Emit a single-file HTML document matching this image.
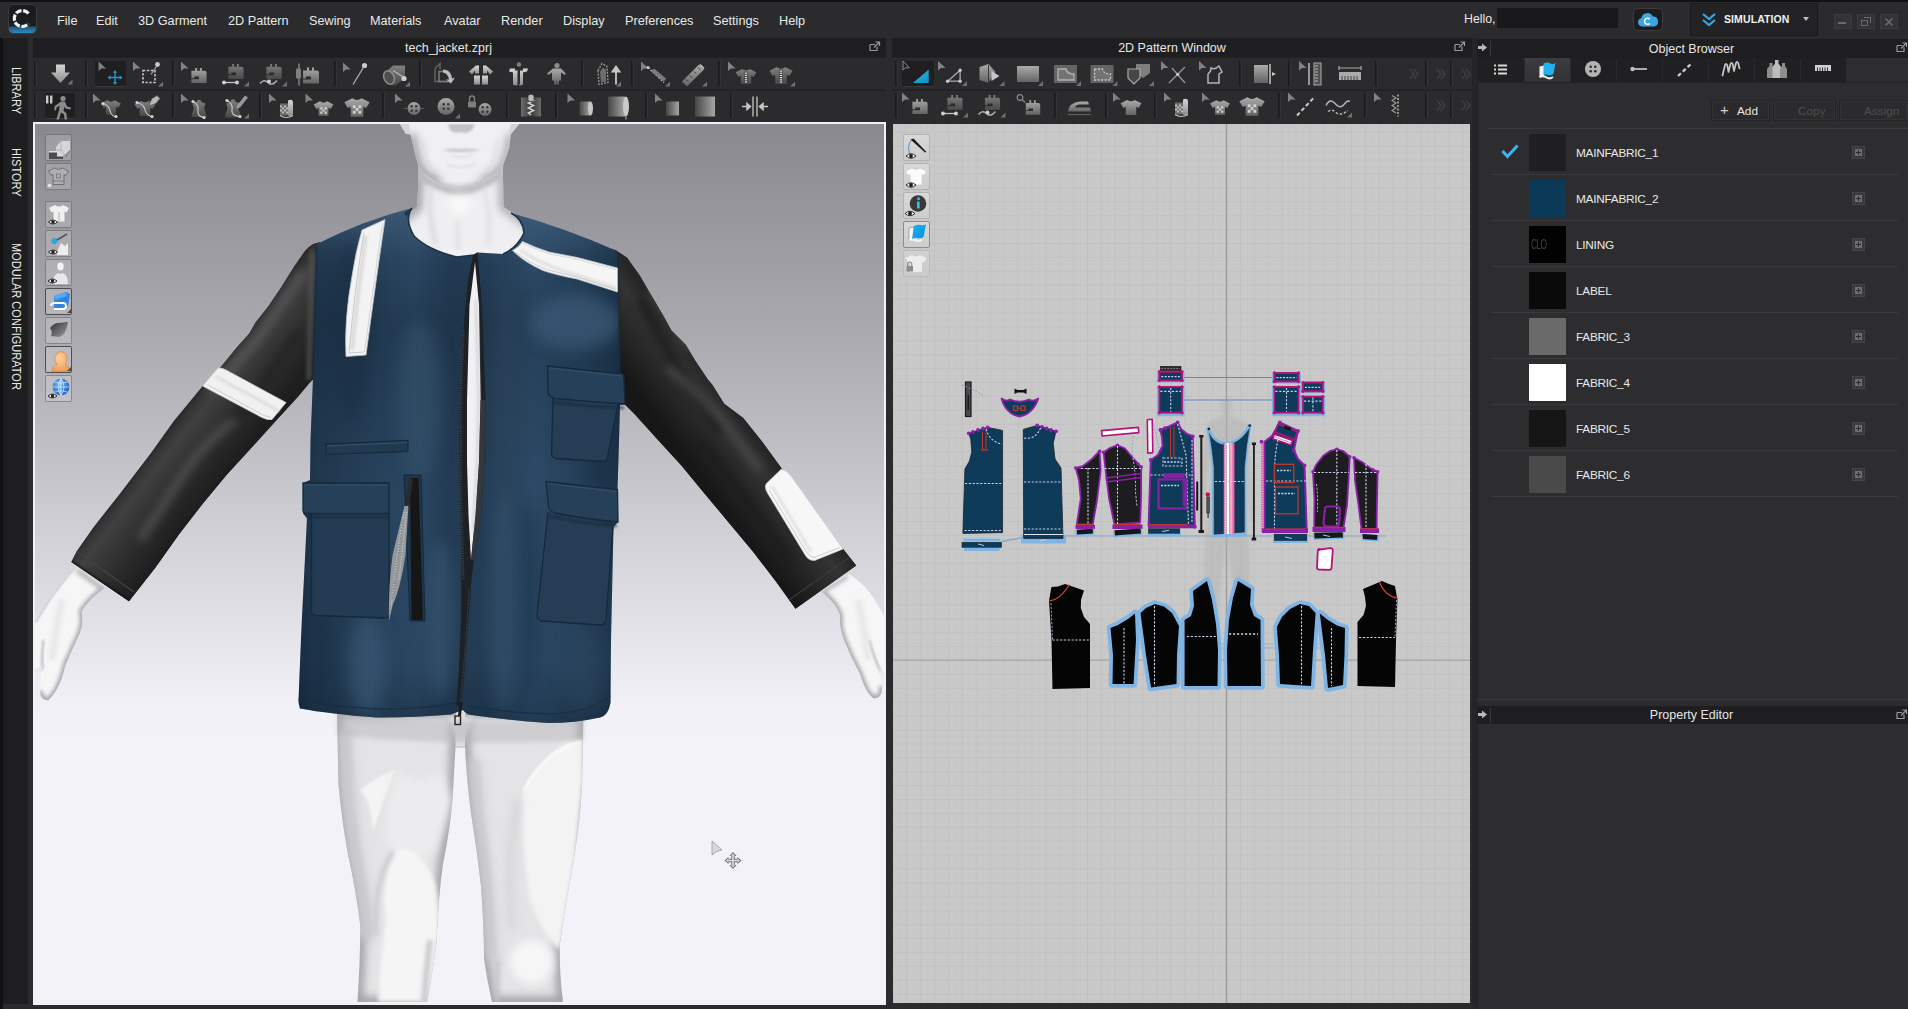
<!DOCTYPE html>
<html><head><meta charset="utf-8"><title>CLO</title>
<style>
*{box-sizing:border-box;margin:0;padding:0}
html,body{width:1908px;height:1009px;overflow:hidden;background:#2b2b2d;}
body{position:relative;font-family:"Liberation Sans",sans-serif;color:#e6e6e6;font-size:13px;}
.abs{position:absolute}
.menu{position:absolute;top:0;left:0;width:1908px;height:38px;background:#2b2b2d;border-top:2px solid #111113}
.menu span{position:absolute;top:12px;font-size:12.7px;color:#e8e8e8;white-space:nowrap;letter-spacing:0px}
.tbar{position:absolute;background:#1e1e20;height:19px;top:38px;text-align:center;font-size:12.5px;line-height:20px;color:#e6e6e6}
.side{position:absolute;left:3px;top:38px;width:25px;height:966px;background:#1e1e20}
.vtxt{position:absolute;left:16px;transform-origin:0 0;transform:rotate(90deg) scale(0.85,1);font-size:13px;color:#e8e8e8;white-space:nowrap;letter-spacing:0px;line-height:14px;margin-top:0}
.sep{position:absolute;width:2px;height:26px;background:#1c1c1e;border-right:1px solid #39393b}
.ic{position:absolute;width:30px;height:26px}
.tsep{position:absolute;width:3px;height:25px;background:#222224;border-left:1px solid #1a1a1c;border-right:1px solid #343436}

.row{position:absolute;left:1492px;width:406px;height:46px;border-bottom:1px solid #3a3a3c}
.row .sw{position:absolute;left:37px;top:5px;width:37px;height:37px}
.row .nm{position:absolute;left:84px;top:17px;font-size:11.8px;color:#e8e8e8;letter-spacing:-0.25px}
.row .ri{position:absolute;left:360px;top:17px;width:13px;height:13px;background:#3a3a3c;border:1px solid #444446}
.btn{position:absolute;top:100px;height:21px;background:#2a2a2c;border:1px solid #242426;box-shadow:inset 0 0 0 1px #333335;font-size:11.8px;line-height:20px}
</style></head>
<body>
<div class="abs" style="left:0;top:0;width:3px;height:1009px;background:#111113"></div>
<div class="menu">
<span style="left:57px">File</span>
<span style="left:96px">Edit</span>
<span style="left:138px">3D Garment</span>
<span style="left:228px">2D Pattern</span>
<span style="left:309px">Sewing</span>
<span style="left:370px">Materials</span>
<span style="left:444px">Avatar</span>
<span style="left:501px">Render</span>
<span style="left:563px">Display</span>
<span style="left:625px">Preferences</span>
<span style="left:713px">Settings</span>
<span style="left:779px">Help</span>
</div>
<svg class="abs" style="left:8px;top:4px" width="29" height="30" viewBox="0 0 29 30">
<defs><linearGradient id="lg1" x1="0" y1="0" x2="0" y2="1"><stop offset="0" stop-color="#1a1a1c"/><stop offset="0.72" stop-color="#1c1d20"/><stop offset="0.8" stop-color="#1f5f86"/><stop offset="1" stop-color="#2f8fc4"/></linearGradient></defs>
<rect x="0.5" y="0.5" width="28" height="29" rx="5" fill="url(#lg1)" stroke="#3a3a3c"/>
<path d="M20.5 9.5 A8 8 0 1 0 20.5 19.5" fill="none" stroke="#f2f2f2" stroke-width="3.2" stroke-dasharray="6.2 1.6"/>
</svg>
<div class="abs" style="left:1464px;top:12px;font-size:12.3px;color:#e8e8e8">Hello,</div>
<div class="abs" style="left:1497px;top:8px;width:121px;height:20px;background:#19191b"></div>
<div class="abs" style="left:1633px;top:8px;width:30px;height:23px;background:#1c1c1e;border:1px solid #3c3c3e;border-radius:5px"></div>
<svg class="abs" style="left:1637px;top:11px" width="22" height="17" viewBox="0 0 22 17"><path d="M5 15.5a4.2 4.2 0 0 1-.6-8.3A6 6 0 0 1 15.8 5.6 5 5 0 0 1 17 15.5z" fill="#3aa7e6"/><path d="M12.7 8.2a3 3 0 1 0 0 4.2" fill="none" stroke="#fff" stroke-width="1.5"/></svg>
<div class="abs" style="left:1690px;top:3px;width:128px;height:33px;background:#232325;border:1px solid #1a1a1c"></div>
<svg class="abs" style="left:1701px;top:12px" width="16" height="15" viewBox="0 0 16 15"><path d="M2 2l6 5 6-5M2 8l6 5 6-5" fill="none" stroke="#34a7e8" stroke-width="2.2"/></svg>
<div class="abs" style="left:1724px;top:13px;font-size:10.5px;font-weight:bold;color:#f0f0f0;letter-spacing:0.1px">SIMULATION</div>
<div class="abs" style="left:1803px;top:17px;width:0;height:0;border-left:3.5px solid transparent;border-right:3.5px solid transparent;border-top:4px solid #bdbdbd"></div>
<div class="abs" style="left:1834px;top:14px;width:18px;height:15px;background:#333335;border:1px solid #3b3b3d"></div>
<div class="abs" style="left:1857px;top:14px;width:18px;height:15px;background:#333335;border:1px solid #3b3b3d"></div>
<div class="abs" style="left:1880px;top:14px;width:18px;height:15px;background:#333335;border:1px solid #3b3b3d"></div>
<div class="abs" style="left:1838px;top:22px;width:8px;height:2px;background:#6a6a6c"></div>
<div class="abs" style="left:1861px;top:20px;width:7px;height:6px;border:1.5px solid #6a6a6c"></div><div class="abs" style="left:1864px;top:17px;width:7px;height:6px;border:1.5px solid #6a6a6c;border-left:none;border-bottom:none"></div>
<svg class="abs" style="left:1884px;top:17px" width="10" height="10" viewBox="0 0 10 10"><path d="M1.5 1.5l7 7M8.5 1.5l-7 7" stroke="#6a6a6c" stroke-width="1.6"/></svg>
<div class="side"></div>
<div class="abs" style="left:28px;top:38px;width:5px;height:971px;background:#2b2b2d"></div>
<div class="vtxt" style="left:23px;top:67px">LIBRARY</div>
<div class="vtxt" style="left:23px;top:148px">HISTORY</div>
<div class="vtxt" style="left:23px;top:243px">MODULAR CONFIGURATOR</div>
<div class="tbar" style="left:33px;width:853px"><span style="position:relative;left:-11px">tech_jacket.zprj</span></div>
<svg class="abs" style="left:869px;top:41px" width="12" height="11" viewBox="0 0 12 11"><path d="M1 3.5h5M1 3.5v6h7v-4" fill="none" stroke="#9a9a9a" stroke-width="1.2"/><path d="M5 6.5l5-5M6.5 1h4v4" fill="none" stroke="#9a9a9a" stroke-width="1.2"/></svg>
<div class="tbar" style="left:892px;width:580px;padding-left:0px"><span style="position:relative;left:-10px">2D Pattern Window</span></div>
<svg class="abs" style="left:1454px;top:41px" width="12" height="11" viewBox="0 0 12 11"><path d="M1 3.5h5M1 3.5v6h7v-4" fill="none" stroke="#9a9a9a" stroke-width="1.2"/><path d="M5 6.5l5-5M6.5 1h4v4" fill="none" stroke="#9a9a9a" stroke-width="1.2"/></svg>
<div class="tbar" style="left:1477px;width:431px;top:39px"><span style="position:relative;left:-1px">Object Browser</span></div>
<svg class="abs" style="left:1896px;top:42px" width="12" height="11" viewBox="0 0 12 11"><path d="M1 3.5h5M1 3.5v6h7v-4" fill="none" stroke="#9a9a9a" stroke-width="1.2"/><path d="M5 6.5l5-5M6.5 1h4v4" fill="none" stroke="#9a9a9a" stroke-width="1.2"/></svg>
<svg class="abs" style="left:1478px;top:43px" width="10" height="9" viewBox="0 0 10 9"><path d="M0 3h4V0.5l5 4-5 4V6H0z" fill="#b9b9b9"/></svg><div class="abs" style="left:1490px;top:41px;width:1px;height:15px;background:#3a3a3c"></div>
<div class="abs" style="left:33px;top:57px;width:853px;height:1px;background:#232325"></div>
<div class="abs" style="left:33px;top:89px;width:853px;height:2px;background:#232325"></div>
<div class="abs" style="left:892px;top:57px;width:580px;height:1px;background:#232325"></div>
<div class="abs" style="left:892px;top:89px;width:580px;height:2px;background:#232325"></div>
<div class="abs" style="left:95px;top:61px;width:31px;height:26px;background:#1f1f21;border-bottom:1px solid #3a3a3c;border-radius:2px"></div>
<div class="abs" style="left:45px;top:93px;width:30px;height:26px;background:#1f1f21;border-bottom:1px solid #3a3a3c;border-radius:2px"></div>
<div class="abs" style="left:902px;top:61px;width:32px;height:26px;background:#1f1f21;border-bottom:1px solid #3a3a3c;border-radius:2px"></div>
<div class="tsep" style="left:34.0px;top:61px"></div>
<div class="tsep" style="left:84.5px;top:61px"></div>
<div class="tsep" style="left:171.5px;top:61px"></div>
<div class="tsep" style="left:333.5px;top:61px"></div>
<div class="tsep" style="left:419.0px;top:61px"></div>
<div class="tsep" style="left:581.0px;top:61px"></div>
<div class="tsep" style="left:630.5px;top:61px"></div>
<div class="tsep" style="left:717.5px;top:61px"></div>
<div class="tsep" style="left:34.0px;top:93px"></div>
<div class="tsep" style="left:84.5px;top:93px"></div>
<div class="tsep" style="left:171.5px;top:93px"></div>
<div class="tsep" style="left:258.5px;top:93px"></div>
<div class="tsep" style="left:381.5px;top:93px"></div>
<div class="tsep" style="left:505.5px;top:93px"></div>
<div class="tsep" style="left:555.0px;top:93px"></div>
<div class="tsep" style="left:644.5px;top:93px"></div>
<div class="tsep" style="left:729.5px;top:93px"></div>
<div class="tsep" style="left:894.5px;top:61px"></div>
<div class="tsep" style="left:1238.5px;top:61px"></div>
<div class="tsep" style="left:1288.0px;top:61px"></div>
<div class="tsep" style="left:1374.5px;top:61px"></div>
<div class="tsep" style="left:1424.5px;top:61px"></div>
<div class="tsep" style="left:1449.5px;top:61px"></div>
<div class="tsep" style="left:894.5px;top:93px"></div>
<div class="tsep" style="left:1053.5px;top:93px"></div>
<div class="tsep" style="left:1104.5px;top:93px"></div>
<div class="tsep" style="left:1153.5px;top:93px"></div>
<div class="tsep" style="left:1277.5px;top:93px"></div>
<div class="tsep" style="left:1363.5px;top:93px"></div>
<div class="tsep" style="left:1424.5px;top:93px"></div>
<div class="tsep" style="left:1449.5px;top:93px"></div>
<svg class="abs" style="left:0;top:56px;opacity:0.88" width="1476" height="68" viewBox="0 56 1476 68"><defs><linearGradient id="gi" x1="0" y1="0" x2="0" y2="1"><stop offset="0" stop-color="#bdbdbd"/><stop offset="1" stop-color="#6c6c6c"/></linearGradient><linearGradient id="gd" x1="0" y1="0" x2="0" y2="1"><stop offset="0" stop-color="#8c8c8c"/><stop offset="1" stop-color="#4c4c4c"/></linearGradient><linearGradient id="gw" x1="0" y1="0" x2="0" y2="1"><stop offset="0" stop-color="#efefef"/><stop offset="1" stop-color="#9a9a9a"/></linearGradient><linearGradient id="gz" x1="0" y1="0" x2="1" y2="0"><stop offset="0" stop-color="#777"/><stop offset="0.5" stop-color="#3a3a3a"/><stop offset="1" stop-color="#777"/></linearGradient><linearGradient id="gc" x1="0" y1="0" x2="1" y2="1"><stop offset="0" stop-color="#35d4fa"/><stop offset="1" stop-color="#0a9fe2"/></linearGradient><linearGradient id="gh" x1="0" y1="0" x2="1" y2="0"><stop offset="0" stop-color="#4a4a4a"/><stop offset="1" stop-color="#b8b8b8"/></linearGradient></defs><g transform="translate(60.5 74.5)"><path d="M-4.500-10h9v8h5L0 8.500-9.500-2h5z" fill="url(#gw)"/><path d="M12 5v5h-5z" fill="#7a7a7a"/></g><g transform="translate(112.5 74.5)"><path d="M-14 -13l0 9.5 3-2.6 4.6 0z" fill="#8e8e8e"/><g transform="translate(2.500 3)" stroke="#24a8e6" stroke-width="1.400" fill="#24a8e6"><path d="M0-5.500v11M-5.500 0h11" /><path d="M0-7.500l-2.200 2.800h4.400zM0 7.500l-2.200-2.800h4.400zM-7.500 0l2.800-2.200v4.400zM7.500 0l-2.800-2.200v4.400z" stroke="none"/></g></g><g transform="translate(149 74.5)"><path d="M-16 -13l0 9.5 3-2.6 4.6 0z" fill="#8e8e8e"/><rect x="-6" y="-4" width="12" height="12" fill="none" stroke="#dcdcdc" stroke-width="1.6" stroke-dasharray="2.4 1.5"/><path d="M2 0l6-9" stroke="#bbb" stroke-width="1.2"/><circle cx="8.5" cy="-10" r="2.4" fill="#ddd"/><path d="M14 7v5h-5z" fill="#7a7a7a"/></g><g transform="translate(196 74.5)"><path d="M-15 -13l0 9.5 3-2.6 4.6 0z" fill="#8e8e8e"/><path transform="translate(3 1) scale(0.95)" d="M-8-5h4v-3h2v3h3v-3h2v3h3q2 0 2 2V8H-8V4h8V1h-5v2h-3z" fill="url(#gi)"/></g><g transform="translate(234 74.5)"><path transform="translate(2 -3) scale(0.95)" d="M-8-5h4v-3h2v3h3v-3h2v3h3q2 0 2 2V8H-8V4h8V1h-5v2h-3z" fill="url(#gd)"/><path d="M-10 8h13" stroke="#ddd" stroke-width="1.3"/><circle cx="-10" cy="8" r="2" fill="#e6e6e6"/><circle cx="3" cy="8" r="2" fill="#e6e6e6"/><path d="M15 7v5h-5z" fill="#7a7a7a"/></g><g transform="translate(272 74.5)"><path transform="translate(2 -3) scale(0.95)" d="M-8-5h4v-3h2v3h3v-3h2v3h3q2 0 2 2V8H-8V4h8V1h-5v2h-3z" fill="url(#gd)"/><path d="M-12 9q4-5 8-1t9-2" stroke="#bbb" stroke-width="1.6" fill="none"/><circle cx="-3" cy="7" r="2" fill="#e6e6e6"/><path d="M15 7v5h-5z" fill="#7a7a7a"/></g><g transform="translate(308 74.5)"><path transform="translate(3 1) scale(1.0)" d="M-8-5h4v-3h2v3h3v-3h2v3h3q2 0 2 2V8H-8V4h8V1h-5v2h-3z" fill="url(#gi)"/><path d="M-9-11v22" stroke="#8a8a8a" stroke-width="1.6"/><rect x="-12" y="-6" width="5" height="10" rx="1" fill="#8a8a8a"/></g><g transform="translate(356 74.5)"><path d="M-13 -12l0 9.5 3-2.6 4.6 0z" fill="#8e8e8e"/><path d="M-3 10L8-8" stroke="#bbb" stroke-width="1.4"/><circle cx="8.5" cy="-9" r="2.6" fill="#e2e2e2"/></g><g transform="translate(395 74.5)"><path d="M-12 0l10-9h12v13l-10 7q-8 0-12-11z" fill="url(#gd)"/><ellipse cx="-6" cy="3" rx="5" ry="7" fill="#555" stroke="#999" stroke-width="1.5" transform="rotate(-25 -6 3)"/><path d="M-2-4l11 7" stroke="#ccc" stroke-width="1.3"/><circle cx="9" cy="4" r="2.6" fill="#e6e6e6"/><path d="M15 7v5h-5z" fill="#7a7a7a"/></g><g transform="translate(443 74.5)"><path d="M-8-6l5-5v6M-8-6v13h13" fill="none" stroke="#6c6c6c" stroke-width="1.4"/><path d="M-4-3h6l5 5v5H-4z" fill="none" stroke="#8a8a8a" stroke-width="1.4"/><path d="M0-5q8 0 9 9l3-1-4 6-5-4 3 0q-1-6-6-7z" fill="#cfcfcf"/></g><g transform="translate(481 74.5)"><path d="M-12-3l7-6h3v8h-4v-3l-3 4zM12-3l-7-6h-3v8h4v-3l3 4z" fill="url(#gw)"/><rect x="-7" y="1" width="6" height="9" fill="url(#gw)"/><rect x="1" y="1" width="6" height="9" fill="url(#gw)"/></g><g transform="translate(519 74.5)"><circle cx="0" cy="-10" r="2.200" fill="#8a8a8a"/><path d="M-9-6h18l-1 3-4 1v12q-4 2-4.500 0v-14h-1v14q-0.500 2-4.500 0v-12l-4-1z" fill="url(#gw)"/><path d="M-4-7h8v3h-3v14h-2v-14h-3z" fill="#2e2e2e"/></g><g transform="translate(557 74.5)"><circle cx="0" cy="-9" r="2.600" fill="#9a9a9a"/><path d="M-4-6h8l5 5-1.500 1.500-3.500-2.500v8h-2.200v4h-2v-4h-0.600v4h-2v-4H-5v-8l-3.500 2.500L-10-1z" fill="url(#gi)"/></g><g transform="translate(608 74.5)"><path d="M-10-4l4-7 5 3 1 16-9 2z" fill="none" stroke="#aaa" stroke-width="1.3" stroke-dasharray="2 1.2"/><path d="M-8-3l3-4 3 2v12l-5 1z" fill="#777"/><path d="M8 10V-4M8-8l-3.5 5h7z" stroke="#ddd" stroke-width="1.8" fill="#ddd"/><path d="M13 7v5h-5z" fill="#7a7a7a"/></g><g transform="translate(656 74.5)"><path d="M-15 -13l0 9.5 3-2.6 4.6 0z" fill="#8e8e8e"/><path d="M-8-7L8 8" stroke="#ddd" stroke-width="1.3" stroke-dasharray="2 1.5"/><path d="M-2-6l12 10-2 3L-5-3z" fill="#888"/><circle cx="-8" cy="-7" r="1.6" fill="#ddd"/><path d="M14 7v5h-5z" fill="#7a7a7a"/></g><g transform="translate(693 74.5)"><path d="M-11 7L6-10l5 5L-6 12z" fill="url(#gi)"/><path d="M-7 5l2 2M-3 1l2 2M1-3l2 2M5-7l2 2" stroke="#333" stroke-width="1"/><path d="M7-10l4 4" stroke="#ddd" stroke-width="1.5"/><path d="M14 7v5h-5z" fill="#7a7a7a"/></g><g transform="translate(743 74.5)"><path d="M-15 -13l0 9.5 3-2.6 4.6 0z" fill="#8e8e8e"/><path transform="translate(3 2) scale(0.95)" d="M-4-8q4 3 8 0l7 3.5-3 5-2.5-1.2V8h-11V-0.7l-2.5 1.2-3-5z" fill="url(#gd)"/><rect x="1.500" y="-3" width="3" height="12" fill="#4a4a4a"/><path d="M3-2v11" stroke="#f0f0f0" stroke-width="2" stroke-dasharray="1.200 1"/></g><g transform="translate(781 74.5)"><path transform="translate(0 1) scale(1.05)" d="M-4-8q4 3 8 0l7 3.5-3 5-2.5-1.2V8h-11V-0.7l-2.5 1.2-3-5z" fill="url(#gd)"/><rect x="-1.800" y="-5" width="3.600" height="14" fill="#4a4a4a"/><path d="M0-4v13" stroke="#f0f0f0" stroke-width="2.200" stroke-dasharray="1.200 1"/><path d="M14 7v5h-5z" fill="#7a7a7a"/></g><g transform="translate(60 106.5)"><rect x="-14" y="-11" width="2.4" height="8" fill="#e0e0e0"/><rect x="-10" y="-11" width="2.4" height="8" fill="#e0e0e0"/><circle cx="3" cy="-8" r="2.6" fill="#9a9a9a"/><path d="M1-5l4 0 2 5 4 1-0.5 2-5-1-1-2-1 4 3 3 0.5 6h-2.4l-0.6-5-3-2-2 7h-2.6l2.6-9 0.6-5-3 2-0.6 3-2-0.4 0.8-4z" fill="#9a9a9a"/></g><g transform="translate(108 106.5)"><path d="M-15 -13l0 9.5 3-2.6 4.6 0z" fill="#8e8e8e"/><path transform="translate(3 1) scale(0.9)" d="M-4-8q4 3 8 0l7 3.5-3 5-2.5-1.2V8h-11V-0.7l-2.5 1.2-3-5z" fill="url(#gd)"/><path d="M-5-3q6 2 7 7t5 6" fill="none" stroke="#ddd" stroke-width="1.2"/><circle cx="-5" cy="-3" r="1.6" fill="#eee"/><circle cx="8" cy="10" r="1.6" fill="#eee"/></g><g transform="translate(147 106.5)"><path transform="translate(-2 2) scale(0.95)" d="M-4-8q4 3 8 0l7 3.5-3 5-2.5-1.2V8h-11V-0.7l-2.5 1.2-3-5z" fill="url(#gd)"/><path d="M-10-4q7 2 8 7t6 7" fill="none" stroke="#ddd" stroke-width="1.2"/><circle cx="-10" cy="-4" r="1.6" fill="#eee"/><circle cx="5" cy="10" r="1.6" fill="#eee"/><path d="M2-2l3-6 5-3 3 3-4 5-5 2z" fill="#ccc" stroke="#555" stroke-width="0.8"/></g><g transform="translate(196 106.5)"><path d="M-15 -13l0 9.5 3-2.6 4.6 0z" fill="#8e8e8e"/><path transform="translate(3 2) scale(0.95)" d="M-2-9h4v2l5 2q-3 5 0 9l1 5H-8l1-5q3-4 0-9l5-2z" fill="url(#gd)"/><path d="M-3-5q6 3 5 9t6 7" fill="none" stroke="#ddd" stroke-width="1.2"/><circle cx="-3" cy="-5" r="1.6" fill="#eee"/><circle cx="8" cy="11" r="1.6" fill="#eee"/></g><g transform="translate(235 106.5)"><path transform="translate(-2 2) scale(1.0)" d="M-2-9h4v2l5 2q-3 5 0 9l1 5H-8l1-5q3-4 0-9l5-2z" fill="url(#gd)"/><path d="M-8-6q6 3 5 9t7 7" fill="none" stroke="#ddd" stroke-width="1.2"/><circle cx="-8" cy="-6" r="1.6" fill="#eee"/><circle cx="5" cy="10" r="1.6" fill="#eee"/><path d="M2-1l8-10 3 2-8 10-4 1z" fill="#aaa"/><path d="M14 7v5h-5z" fill="#7a7a7a"/></g><g transform="translate(284 106.5)"><path d="M-15 -13l0 9.5 3-2.6 4.6 0z" fill="#8e8e8e"/><path d="M-4-3h8v12h-8z" fill="#777"/><rect x="-4.0" y="-1.0" width="2" height="2" fill="#cfcfcf"/><rect x="-4.0" y="3.0" width="2" height="2" fill="#cfcfcf"/><rect x="-2.0" y="1.0" width="2" height="2" fill="#cfcfcf"/><rect x="-2.0" y="5.0" width="2" height="2" fill="#cfcfcf"/><rect x="0.0" y="-1.0" width="2" height="2" fill="#cfcfcf"/><rect x="0.0" y="3.0" width="2" height="2" fill="#cfcfcf"/><rect x="2.0" y="1.0" width="2" height="2" fill="#cfcfcf"/><rect x="2.0" y="5.0" width="2" height="2" fill="#cfcfcf"/><path d="M4-6q4-2 5 1v13q-2 3-5 1z" fill="url(#gw)"/><path d="M-4 9q6 4 13 0" fill="none" stroke="#ddd" stroke-width="1.2"/></g><g transform="translate(320.5 106.5)"><path d="M-15 -13l0 9.5 3-2.6 4.6 0z" fill="#8e8e8e"/><path transform="translate(3 2) scale(0.9)" d="M-4-8q4 3 8 0l7 3.5-3 5-2.5-1.2V8h-11V-0.7l-2.5 1.2-3-5z" fill="url(#gi)"/><rect x="-0.3" y="0.7" width="2.2" height="2.2" fill="#e8e8e8"/><rect x="-0.3" y="5.1" width="2.2" height="2.2" fill="#e8e8e8"/><rect x="1.9" y="2.9" width="2.2" height="2.2" fill="#e8e8e8"/><rect x="4.1" y="0.7" width="2.2" height="2.2" fill="#e8e8e8"/><rect x="4.1" y="5.1" width="2.2" height="2.2" fill="#e8e8e8"/></g><g transform="translate(357 106.5)"><path transform="translate(0 1) scale(1.15)" d="M-4-8q4 3 8 0l7 3.5-3 5-2.5-1.2V8h-11V-0.7l-2.5 1.2-3-5z" fill="url(#gi)"/><rect x="-4.2" y="-1.2" width="2.8" height="2.8" fill="#e8e8e8"/><rect x="-4.2" y="4.4" width="2.8" height="2.8" fill="#e8e8e8"/><rect x="-1.4" y="1.6" width="2.8" height="2.8" fill="#e8e8e8"/><rect x="1.4" y="-1.2" width="2.8" height="2.8" fill="#e8e8e8"/><rect x="1.4" y="4.4" width="2.8" height="2.8" fill="#e8e8e8"/></g><g transform="translate(410 106.5)"><path d="M-15 -13l0 9.5 3-2.6 4.6 0z" fill="#8e8e8e"/><circle cx="4" cy="2" r="6.5" fill="url(#gi)"/><g fill="#3a3a3a"><circle cx="1.7000000000000002" cy="-0.2999999999999998" r="1.3"/><circle cx="6.3" cy="-0.2999999999999998" r="1.3"/><circle cx="1.7000000000000002" cy="4.3" r="1.3"/><circle cx="6.3" cy="4.3" r="1.3"/></g><path d="M-6 2h3M11 2h3" stroke="#666" stroke-width="1"/></g><g transform="translate(446 106.5)"><circle cx="0" cy="0" r="8.5" fill="url(#gi)"/><g fill="#3a3a3a"><circle cx="-2.3" cy="-2.3" r="1.3"/><circle cx="2.3" cy="-2.3" r="1.3"/><circle cx="-2.3" cy="2.3" r="1.3"/><circle cx="2.3" cy="2.3" r="1.3"/></g><path d="M14 7v5h-5z" fill="#7a7a7a"/></g><g transform="translate(481 106.5)"><rect x="-13" y="-5" width="8" height="6" rx="1" fill="#8a8a8a"/><path d="M-11.5-5v-3a2.5 2.5 0 0 1 5 0v3" fill="none" stroke="#8a8a8a" stroke-width="1.4"/><circle cx="4" cy="3" r="6.5" fill="url(#gi)"/><g fill="#3a3a3a"><circle cx="1.7000000000000002" cy="0.7000000000000002" r="1.3"/><circle cx="6.3" cy="0.7000000000000002" r="1.3"/><circle cx="1.7000000000000002" cy="5.3" r="1.3"/><circle cx="6.3" cy="5.3" r="1.3"/></g></g><g transform="translate(531 106.5)"><rect x="-10" y="-9" width="20" height="19" fill="url(#gz)"/><path d="M0-8l2.500 2-5 2.500 5 2.500-5 2.500 5 2.500-5 2.500 2.500 2" stroke="#e6e6e6" stroke-width="1.600" fill="none"/><rect x="-3" y="-12" width="6" height="7" rx="2" fill="#cfcfcf" stroke="#444" stroke-width="0.800"/></g><g transform="translate(582.5 106.5)"><path d="M-15 -13l0 9.5 3-2.6 4.6 0z" fill="#8e8e8e"/><rect x="-3" y="-5" width="11" height="14" fill="url(#gh)"/><ellipse cx="8" cy="2" rx="2.5" ry="7" fill="#ddd"/></g><g transform="translate(618 106.5)"><rect x="-10" y="-10" width="17" height="20" fill="url(#gh)"/><ellipse cx="8" cy="0" rx="3" ry="10" fill="#e0e0e0"/><path d="M8 10v3" stroke="#ccc"/></g><g transform="translate(670 106.5)"><path d="M-15 -13l0 9.5 3-2.6 4.6 0z" fill="#8e8e8e"/><rect x="-4" y="-5" width="13" height="14" fill="url(#gh)"/></g><g transform="translate(705 106.5)"><rect x="-10" y="-10" width="20" height="20" fill="url(#gh)"/></g><g transform="translate(755 106.5)"><path d="M-2-10q0 8 0 8t0 12M2-10q0 8 0 8t0 12" stroke="#ddd" stroke-width="1.3" fill="none"/><path d="M-13 0h7M-8-3l3.5 3-3.5 3zM13 0h-7M8-3l-3.5 3 3.5 3z" stroke="#ddd" stroke-width="1.5" fill="#ddd"/></g><g transform="translate(918 74)"><path d="M-15-13l0 9 2.500-2.200 3.800 0z" fill="none" stroke="#9a9a9a" stroke-width="1"/><path d="M-5 9L10.700-4.400v13.400z" fill="url(#gc)"/></g><g transform="translate(953 74)"><path d="M-15 -13l0 9.5 3-2.6 4.6 0z" fill="#8e8e8e"/><path d="M-5.400 7.200L7.100-3.700v10.900z" fill="none" stroke="#bdbdbd" stroke-width="1.300"/><circle cx="-5.400" cy="7.200" r="1.700" fill="#ddd"/><circle cx="7.100" cy="-3.700" r="1.700" fill="#ddd"/><circle cx="7.100" cy="7.200" r="1.700" fill="#ddd"/><path d="M14 7v5h-5z" fill="#7a7a7a"/></g><g transform="translate(990.5 74)"><path d="M-11-7l9-3 7 8-7 11-9-3z" fill="url(#gi)"/><path d="M-2-9v18" stroke="#3a3a3a" stroke-width="1"/><path d="M1-3l8 5-8 5z" fill="#ddd"/><path d="M14 7v5h-5z" fill="#7a7a7a"/></g><g transform="translate(1028 74)"><rect x="-11" y="-8" width="22" height="16" fill="url(#gi)"/><path d="M15 7v5h-5z" fill="#7a7a7a"/></g><g transform="translate(1066 74)"><rect x="-12" y="-9" width="23" height="18" fill="#6c6c6c"/><path d="M-8-5h8q1 5 8 5v6h-16z" fill="#7e7e7e" stroke="#c4c4c4" stroke-width="1.300"/><path d="M15 7v5h-5z" fill="#7a7a7a"/></g><g transform="translate(1102.5 74)"><rect x="-12" y="-9" width="23" height="18" fill="#6c6c6c"/><path d="M-8-5h8q1 5 8 5v6h-16z" fill="#7e7e7e" stroke="#e0e0e0" stroke-width="1.300" stroke-dasharray="2 1.500"/><path d="M15 7v5h-5z" fill="#7a7a7a"/></g><g transform="translate(1139 74)"><path d="M-3-10h14v9l-7 5-7-5z" fill="#8a8a8a"/><path d="M-11-5h12v9l-6 6-6-6z" fill="#4a4a4a" stroke="#bbb" stroke-width="1.2"/><path d="M15 7v5h-5z" fill="#7a7a7a"/></g><g transform="translate(1176 74)"><path d="M-15 -13l0 9.5 3-2.6 4.6 0z" fill="#8e8e8e"/><path d="M-7 9L9-7M-4-6L9 9" stroke="#a8a8a8" stroke-width="1.200"/><circle cx="1.700" cy="0.400" r="1.600" fill="#ddd"/></g><g transform="translate(1214 74)"><path d="M-15 -13l0 9.5 3-2.6 4.6 0z" fill="#8e8e8e"/><path d="M-3-6q4 2 8-2l3 6-3 2v9h-11v-9q3-2 3-6z" fill="none" stroke="#c8c8c8" stroke-width="1.5"/></g><g transform="translate(1264 74)"><rect x="-10" y="-9" width="14" height="18" fill="url(#gi)"/><path d="M6-10v20" stroke="#ddd" stroke-width="1.5"/><path d="M8-2l4 2-4 2z" fill="#ddd"/></g><g transform="translate(1314 74)"><path d="M-15 -13l0 9.5 3-2.6 4.6 0z" fill="#8e8e8e"/><rect x="0" y="-11" width="7" height="22" fill="#555" stroke="#ccc" stroke-width="0.9"/><path d="M1-8h3M1-5h3M1-2h3M1 1h3M1 4h3M1 7h3" stroke="#ddd" stroke-width="0.9"/><path d="M-5-11v22" stroke="#ddd" stroke-width="1.4"/></g><g transform="translate(1350 74)"><rect x="-11" y="-2" width="22" height="8" fill="#bdbdbd"/><path d="M-8 6v-4M-5 6v-4M-2 6v-4M1 6v-4M4 6v-4M7 6v-4" stroke="#444" stroke-width="1"/><path d="M-11-6h22M-11-8v4M11-8v4" stroke="#bbb" stroke-width="1.2"/></g><g transform="translate(1413 74)"><path d="M-3-5l4 5-4 5M1-5l4 5-4 5" fill="none" stroke="#444446" stroke-width="1.3"/></g><g transform="translate(1440 74)"><path d="M-3-5l4 5-4 5M1-5l4 5-4 5" fill="none" stroke="#444446" stroke-width="1.3"/></g><g transform="translate(1465 74)"><path d="M-3-5l4 5-4 5M1-5l4 5-4 5" fill="none" stroke="#444446" stroke-width="1.3"/></g><g transform="translate(917 105.5)"><path d="M-15 -13l0 9.5 3-2.6 4.6 0z" fill="#8e8e8e"/><path transform="translate(3 1) scale(0.95)" d="M-8-5h4v-3h2v3h3v-3h2v3h3q2 0 2 2V8H-8V4h8V1h-5v2h-3z" fill="url(#gi)"/></g><g transform="translate(953 105.5)"><path transform="translate(2 -3) scale(0.95)" d="M-8-5h4v-3h2v3h3v-3h2v3h3q2 0 2 2V8H-8V4h8V1h-5v2h-3z" fill="url(#gd)"/><path d="M-10 8h13" stroke="#ddd" stroke-width="1.3"/><circle cx="-10" cy="8" r="2" fill="#e6e6e6"/><circle cx="3" cy="8" r="2" fill="#e6e6e6"/><path d="M15 7v5h-5z" fill="#7a7a7a"/></g><g transform="translate(990.5 105.5)"><path transform="translate(2 -3) scale(0.95)" d="M-8-5h4v-3h2v3h3v-3h2v3h3q2 0 2 2V8H-8V4h8V1h-5v2h-3z" fill="url(#gd)"/><path d="M-12 9q4-5 8-1t9-2" stroke="#bbb" stroke-width="1.6" fill="none"/><circle cx="-3" cy="7" r="2" fill="#e6e6e6"/><path d="M15 7v5h-5z" fill="#7a7a7a"/></g><g transform="translate(1030 105.5)"><circle cx="-10" cy="-8" r="2.8" fill="none" stroke="#999" stroke-width="1.2"/><path d="M-8-6l3 3" stroke="#999" stroke-width="1.3"/><path transform="translate(3 2) scale(0.9)" d="M-8-5h4v-3h2v3h3v-3h2v3h3q2 0 2 2V8H-8V4h8V1h-5v2h-3z" fill="url(#gi)"/></g><g transform="translate(1079 105.5)"><path d="M-11 6q1-9 12-10l8 0 1 3-9 0q-4 0-5 3h15l1 4z" fill="url(#gi)"/><path d="M-11 9h23" stroke="#666" stroke-width="1.2"/></g><g transform="translate(1128 105.5)"><path d="M-15 -13l0 9.5 3-2.6 4.6 0z" fill="#8e8e8e"/><path transform="translate(3 2) scale(0.95)" d="M-4-8q4 3 8 0l7 3.5-3 5-2.5-1.2V8h-11V-0.7l-2.5 1.2-3-5z" fill="url(#gi)"/></g><g transform="translate(1179 105.5)"><path d="M-15 -13l0 9.5 3-2.6 4.6 0z" fill="#8e8e8e"/><path d="M-4-3h8v12h-8z" fill="#777"/><rect x="-4.0" y="-1.0" width="2" height="2" fill="#cfcfcf"/><rect x="-4.0" y="3.0" width="2" height="2" fill="#cfcfcf"/><rect x="-2.0" y="1.0" width="2" height="2" fill="#cfcfcf"/><rect x="-2.0" y="5.0" width="2" height="2" fill="#cfcfcf"/><rect x="0.0" y="-1.0" width="2" height="2" fill="#cfcfcf"/><rect x="0.0" y="3.0" width="2" height="2" fill="#cfcfcf"/><rect x="2.0" y="1.0" width="2" height="2" fill="#cfcfcf"/><rect x="2.0" y="5.0" width="2" height="2" fill="#cfcfcf"/><path d="M4-6q4-2 5 1v13q-2 3-5 1z" fill="url(#gw)"/><path d="M-4 9q6 4 13 0" fill="none" stroke="#ddd" stroke-width="1.2"/></g><g transform="translate(1217 105.5)"><path d="M-15 -13l0 9.5 3-2.6 4.6 0z" fill="#8e8e8e"/><path transform="translate(3 2) scale(0.9)" d="M-4-8q4 3 8 0l7 3.5-3 5-2.5-1.2V8h-11V-0.7l-2.5 1.2-3-5z" fill="url(#gi)"/><rect x="-0.3" y="0.7" width="2.2" height="2.2" fill="#e8e8e8"/><rect x="-0.3" y="5.1" width="2.2" height="2.2" fill="#e8e8e8"/><rect x="1.9" y="2.9" width="2.2" height="2.2" fill="#e8e8e8"/><rect x="4.1" y="0.7" width="2.2" height="2.2" fill="#e8e8e8"/><rect x="4.1" y="5.1" width="2.2" height="2.2" fill="#e8e8e8"/></g><g transform="translate(1252 105.5)"><path transform="translate(0 1) scale(1.15)" d="M-4-8q4 3 8 0l7 3.5-3 5-2.5-1.2V8h-11V-0.7l-2.5 1.2-3-5z" fill="url(#gi)"/><rect x="-4.2" y="-1.2" width="2.8" height="2.8" fill="#e8e8e8"/><rect x="-4.2" y="4.4" width="2.8" height="2.8" fill="#e8e8e8"/><rect x="-1.4" y="1.6" width="2.8" height="2.8" fill="#e8e8e8"/><rect x="1.4" y="-1.2" width="2.8" height="2.8" fill="#e8e8e8"/><rect x="1.4" y="4.4" width="2.8" height="2.8" fill="#e8e8e8"/></g><g transform="translate(1303 105.5)"><path d="M-15 -13l0 9.5 3-2.6 4.6 0z" fill="#8e8e8e"/><path d="M-6 10L11-8" stroke="#e0e0e0" stroke-width="2" stroke-dasharray="4 2.5"/></g><g transform="translate(1338 105.5)"><path d="M-12 0q4-8 9-2t9 1 6-3" fill="none" stroke="#ccc" stroke-width="1.4"/><path d="M-10 6q4-3 8 1t12-2" fill="none" stroke="#ccc" stroke-width="1.4" stroke-dasharray="2.5 1.8"/><path d="M14 7v5h-5z" fill="#7a7a7a"/></g><g transform="translate(1389 105.5)"><path d="M-15 -13l0 9.5 3-2.6 4.6 0z" fill="#8e8e8e"/><path d="M3-10l4 2.5-4 2.5 4 2.5-4 2.5 4 2.5-4 2.5 4 2.5" fill="none" stroke="#aaa" stroke-width="1.1"/><path d="M9-11v22" stroke="#ddd" stroke-width="1.3" stroke-dasharray="2 1.5"/></g><g transform="translate(1440 105.5)"><path d="M-3-5l4 5-4 5M1-5l4 5-4 5" fill="none" stroke="#444446" stroke-width="1.3"/></g><g transform="translate(1465 105.5)"><path d="M-3-5l4 5-4 5M1-5l4 5-4 5" fill="none" stroke="#444446" stroke-width="1.3"/></g></svg>
<div class="abs" style="left:33px;top:122px;width:853px;height:883px;background:#f2f2f6"></div>
<svg class="abs" style="left:35px;top:124px" width="849" height="878" viewBox="35 124 849 878">
<defs>
<linearGradient id="bg3" gradientUnits="userSpaceOnUse" x1="0" y1="124" x2="0" y2="1002">
<stop offset="0" stop-color="#88888e"/><stop offset="0.25" stop-color="#ababb1"/><stop offset="0.45" stop-color="#cdcdd3"/><stop offset="0.58" stop-color="#e3e3e9"/><stop offset="0.665" stop-color="#f1f1f7"/><stop offset="0.7" stop-color="#f2f2f8"/><stop offset="1" stop-color="#f2f2f8"/></linearGradient>
<linearGradient id="skinH" gradientUnits="userSpaceOnUse" x1="400" y1="0" x2="520" y2="0">
<stop offset="0" stop-color="#cfcfd2"/><stop offset="0.25" stop-color="#f4f4f5"/><stop offset="0.6" stop-color="#f7f7f8"/><stop offset="1" stop-color="#d4d4d7"/></linearGradient>
<linearGradient id="legL" gradientUnits="userSpaceOnUse" x1="336" y1="0" x2="456" y2="0">
<stop offset="0" stop-color="#b2b2b6"/><stop offset="0.06" stop-color="#d0d0d3"/><stop offset="0.2" stop-color="#e4e4e6"/><stop offset="0.5" stop-color="#efeff0"/><stop offset="0.8" stop-color="#e2e2e4"/><stop offset="0.94" stop-color="#cfcfd2"/><stop offset="1" stop-color="#b8b8bc"/></linearGradient>
<linearGradient id="legR" gradientUnits="userSpaceOnUse" x1="465" y1="0" x2="584" y2="0">
<stop offset="0" stop-color="#b8b8bc"/><stop offset="0.06" stop-color="#cfcfd2"/><stop offset="0.2" stop-color="#e0e0e2"/><stop offset="0.5" stop-color="#efeff0"/><stop offset="0.8" stop-color="#e6e6e8"/><stop offset="0.94" stop-color="#d2d2d5"/><stop offset="1" stop-color="#b4b4b8"/></linearGradient>
<linearGradient id="blueH" gradientUnits="userSpaceOnUse" x1="298" y1="0" x2="625" y2="0">
<stop offset="0" stop-color="#192e44"/><stop offset="0.05" stop-color="#20384f"/><stop offset="0.2" stop-color="#28425c"/><stop offset="0.36" stop-color="#2d4a67"/><stop offset="0.47" stop-color="#243d56"/><stop offset="0.56" stop-color="#253f58"/><stop offset="0.72" stop-color="#2f4e6c"/><stop offset="0.86" stop-color="#28435e"/><stop offset="0.97" stop-color="#1e364d"/><stop offset="1" stop-color="#17293d"/></linearGradient>
<linearGradient id="blueV" gradientUnits="userSpaceOnUse" x1="0" y1="208" x2="0" y2="723">
<stop offset="0" stop-color="#5f83a6" stop-opacity="0.35"/><stop offset="0.07" stop-color="#5f83a6" stop-opacity="0.12"/><stop offset="0.12" stop-color="#0b1a28" stop-opacity="0.05"/><stop offset="0.22" stop-color="#0b1a28" stop-opacity="0.22"/><stop offset="0.4" stop-color="#0b1a28" stop-opacity="0.1"/><stop offset="0.55" stop-color="#0b1a28" stop-opacity="0"/><stop offset="0.88" stop-color="#0b1a28" stop-opacity="0"/><stop offset="0.95" stop-color="#0b1a28" stop-opacity="0.18"/><stop offset="1" stop-color="#0b1a28" stop-opacity="0.35"/></linearGradient>
<linearGradient id="slL" gradientUnits="userSpaceOnUse" x1="204" y1="387" x2="259" y2="430">
<stop offset="0" stop-color="#303030"/><stop offset="0.18" stop-color="#404040"/><stop offset="0.42" stop-color="#353535"/><stop offset="0.7" stop-color="#2a2a2a"/><stop offset="1" stop-color="#1e1e1e"/></linearGradient>
<linearGradient id="slR" gradientUnits="userSpaceOnUse" x1="738.5" y1="414" x2="684" y2="455">
<stop offset="0" stop-color="#262626"/><stop offset="0.22" stop-color="#333"/><stop offset="0.5" stop-color="#2a2a2a"/><stop offset="0.75" stop-color="#202020"/><stop offset="1" stop-color="#171717"/></linearGradient>
<filter id="b2" color-interpolation-filters="sRGB" filterUnits="userSpaceOnUse" x="0" y="100" width="900" height="920"><feGaussianBlur stdDeviation="2"/></filter>
<filter id="b4" color-interpolation-filters="sRGB" filterUnits="userSpaceOnUse" x="0" y="100" width="900" height="920"><feGaussianBlur stdDeviation="4"/></filter>
<filter id="b8" color-interpolation-filters="sRGB" filterUnits="userSpaceOnUse" x="0" y="100" width="900" height="920"><feGaussianBlur stdDeviation="8"/></filter>
<filter id="b1" color-interpolation-filters="sRGB" filterUnits="userSpaceOnUse" x="0" y="100" width="900" height="920"><feGaussianBlur stdDeviation="0.8"/></filter>
<pattern id="weave" width="3" height="2.4" patternUnits="userSpaceOnUse"><circle cx="0.8" cy="0.6" r="0.55" fill="#0e2232" opacity="0.35"/><circle cx="2.3" cy="1.8" r="0.55" fill="#0e2232" opacity="0.35"/></pattern>
<clipPath id="cBody"><path d="M317 244 Q362 221 412 208 Q404 219 414 236 Q428 250 457 257 L474 255 L477 252.5 L503 254 Q517 248 524 233 Q523 219 511 213 Q565 228 617 251 L619 328 L620 372 L624.5 375 L625 404 L620 405 L619 440 L617.5 489 L618 522 L613.5 527 L611 640 L610.5 703 Q608 716 600 717.5 Q575 723 548 723 Q505 720 468 714.5 L462.5 710 L451 714.5 Q410 718 376 717.5 Q330 714 300 708.5 Q298 703 298.6 698 L301.5 627 L307 518 L303 513.5 L303 483 L310 480 L310.5 440 L313 379 Z"/></clipPath>
<clipPath id="cLS"><path d="M320 242 L313 244 Q308 247 304.8 251 L293.7 267 L281 287.6 L268.3 306.6 L255.6 322.5 L249.3 333.6 L236.6 347.8 L222.3 365.3 L202.7 386 L174.2 420.4 L150.4 453.7 L119.5 494.2 L93.3 527.5 L76.7 551.3 L71.4 562 L129 601.2 L155.1 567.9 L178.9 534.6 L202.7 503.7 L226.5 475.1 L250.3 449 L274.1 422.8 L297.9 396.7 L309.8 382.4 L313.5 379 L320 379 Z"/></clipPath>
<clipPath id="cRS"><path d="M612 249 L616 250.3 L627 257.4 L639.6 274.9 L652.3 297.1 L663.4 316.1 L671.4 330.4 L685.6 344.7 L695.1 360.5 L707.8 379.5 L712.3 384.8 L724.2 403.8 L743.2 418.1 L762.2 441.8 L781.3 468 L800.3 494.2 L824.1 525.1 L843.1 548.9 L856.2 565.5 L795.5 608.8 L776.5 582.2 L752.7 551.3 L728.9 522.7 L705.1 494.2 L681.4 465.6 L657.6 439.5 L633.8 413.3 L621.9 401.4 L619.5 398 L612 398 Z"/></clipPath>
</defs>
<rect x="35" y="124" width="850" height="878" fill="url(#bg3)"/>
<clipPath id="cNeck"><path d="M418.500 166 L418 190 L417 207 Q410 212 402 219 L402 300 L532 300 L532 228 Q515 214 503.500 207 L502.800 166Z"/></clipPath><clipPath id="cFace"><path d="M400 124 L406 134 L410.500 134.300 L415.700 156.600 L419.400 168.500 Q429 177.500 439.500 183.400 Q450 187.300 460.300 188.200 Q470.700 186.700 481.100 181.900 Q493 174.500 501.900 168.500 L506.300 156.600 L509.300 147.700 L510.800 134.300 L519 124Z"/></clipPath>
<path d="M418.500 166 L418 190 L417 207 Q410 212 402 219 L402 300 L532 300 L532 228 Q515 214 503.500 207 L502.800 166Z" fill="#efeff1"/>
<g clip-path="url(#cNeck)">
<path d="M418 166 L417 207 Q410 212 402 219" fill="none" stroke="#9c9ca2" stroke-width="10" filter="url(#b4)"/>
<path d="M503 166 L503.500 207 Q515 214 532 228" fill="none" stroke="#a4a4aa" stroke-width="8" filter="url(#b4)"/>
<path d="M419.400 168.500 Q429 177.500 439.500 183.400 Q450 187.300 460.300 188.200 Q470.700 186.700 481.100 181.900 Q493 174.500 501.900 168.500 L502 178 Q483 192 460 196 Q436 192 419 180Z" fill="#bcbcc1" filter="url(#b2)"/>
<path d="M430 188 Q428 215 436 245" stroke="#dcdce0" stroke-width="5" fill="none" filter="url(#b2)"/>
<path d="M484 188 Q492 215 488 245" stroke="#e0e0e3" stroke-width="4" fill="none" filter="url(#b2)"/>
<ellipse cx="460" cy="205" rx="12" ry="10" fill="#f8f8f9" filter="url(#b4)"/>
<path d="M457 222 Q459 240 457 254" stroke="#dedee2" stroke-width="3" fill="none" filter="url(#b2)"/>
</g>
<path d="M400 124 L406 134 L410.500 134.300 L415.700 156.600 L419.400 168.500 Q429 177.500 439.500 183.400 Q450 187.300 460.300 188.200 Q470.700 186.700 481.100 181.900 Q493 174.500 501.900 168.500 L506.300 156.600 L509.300 147.700 L510.800 134.300 L519 124Z" fill="#f0f0f2"/>
<g clip-path="url(#cFace)">
<path d="M410.500 134.300 L415.700 156.600 L419.400 168.500 Q429 177.500 439.500 183.400" fill="none" stroke="#9c9ca2" stroke-width="9" filter="url(#b4)"/>
<path d="M510.800 134.300 L509.300 147.700 L506.300 156.600 L501.900 168.500 Q493 174.500 481 182" fill="none" stroke="#a6a6ac" stroke-width="8" filter="url(#b4)"/>
<path d="M440 184 Q460 190 481 182" fill="none" stroke="#c2c2c7" stroke-width="3" filter="url(#b2)"/>
<path d="M448 124 L450 130 Q455 134 460.500 132 Q467 134 472 130 L475 124Z" fill="#c2c2c6" filter="url(#b1)"/>
<path d="M442.500 150.500 Q452 147.500 460.500 149 Q470 147.500 481 150.500 Q470 152 460.500 152 Q452 152 442.500 150.500Z" fill="#c9c9cd" filter="url(#b1)"/>
<path d="M449 153 Q461 160 474 153 Q470 157.500 461 158 Q453 157.500 449 153Z" fill="#dadadd" filter="url(#b1)"/>
<path d="M447 165 Q461 170 476 164" stroke="#e2e2e5" stroke-width="2" fill="none" filter="url(#b1)"/>
<path d="M422 140 Q425 160 432 172" stroke="#dcdce0" stroke-width="3" fill="none" filter="url(#b2)"/><path d="M498 140 Q495 160 488 172" stroke="#dfdfe3" stroke-width="3" fill="none" filter="url(#b2)"/>
</g>
<path d="M419.400 168.500 Q429 177.500 439.500 183.400 Q450 187.300 460.300 188.200 Q470.700 186.700 481.100 181.900 Q493 174.500 501.900 168.500" fill="none" stroke="#b6b6bb" stroke-width="1.200" filter="url(#b1)"/>
<path d="M400 124 L406 134 L410.500 134.300 L409 124Z M519 124 L510.800 134.300 L508.500 134 L511 124Z" fill="#d4d4d8"/>
<path d="M440 250 L510 250 L490 580 L460 580 Z" fill="#f1f1f3"/>
<clipPath id="cLL"><path d="M337 712 L338.5 785 Q342 822 348 854.5 Q356 890 360.5 927 Q360 965 357.5 1002 L427 1002 Q433 970 436.5 943 Q438 900 443 864 Q450 830 452.5 800 L455.5 747 L456 712Z"/></clipPath><clipPath id="cRL"><path d="M465 712 L465 747 Q467 785 471.5 816.5 Q477 850 481 886 Q484 925 484 959 Q487 980 492 1002 L563 1002 Q559 970 560 943 Q565 905 572.5 867 Q580 825 582 785 L583.5 712 Z"/></clipPath>
<path d="M440 712 L482 712 L470 747 L453 747Z" fill="#e2e2e4"/>
<path d="M337 712 L338.5 785 Q342 822 348 854.5 Q356 890 360.5 927 Q360 965 357.5 1002 L427 1002 Q433 970 436.5 943 Q438 900 443 864 Q450 830 452.5 800 L455.5 747 L456 712Z" fill="#e4e4e6"/><path d="M465 712 L465 747 Q467 785 471.5 816.5 Q477 850 481 886 Q484 925 484 959 Q487 980 492 1002 L563 1002 Q559 970 560 943 Q565 905 572.5 867 Q580 825 582 785 L583.5 712 Z" fill="#e4e4e6"/>
<g clip-path="url(#cLL)">
<path d="M337 712 L338.5 785 Q342 822 348 854.5 Q356 890 360.5 927 Q360 965 357.5 1002 L427 1002 Q433 970 436.5 943 Q438 900 443 864 Q450 830 452.5 800 L455.5 747 L456 712Z" fill="none" stroke="#9c9ca2" stroke-width="10" filter="url(#b4)"/>
<path d="M345 730 Q347 800 356 860 Q364 900 367 940" stroke="#c9c9cd" stroke-width="14" fill="none" filter="url(#b4)"/>
<path d="M395 770 Q384 800 373 830 Q371 800 360 790 Q376 777 395 770Z" fill="#f4f4f5" filter="url(#b1)"/>
<path d="M397 768 Q420 790 440 770 L452 800 Q440 840 428 860 Q410 850 390 850 Q378 830 397 768Z" fill="#ececee" filter="url(#b4)"/>
<path d="M395 850 Q418 842 434 880 Q442 905 438 945 Q434 975 428 1002 L378 1002 Q380 960 386 920 Q380 880 395 850Z" fill="#f5f5f6" filter="url(#b2)"/>
<path d="M393 852 Q372 884 376 935" stroke="#cdcdd1" stroke-width="5" fill="none" filter="url(#b2)"/>
<path d="M430 940 Q426 975 424 1002" stroke="#c4c4c8" stroke-width="5" fill="none" filter="url(#b2)"/>
</g>
<g clip-path="url(#cRL)">
<path d="M465 712 L465 747 Q467 785 471.5 816.5 Q477 850 481 886 Q484 925 484 959 Q487 980 492 1002 L563 1002 Q559 970 560 943 Q565 905 572.5 867 Q580 825 582 785 L583.5 712 Z" fill="none" stroke="#9c9ca2" stroke-width="10" filter="url(#b4)"/>
<path d="M474 760 Q478 820 486 880 Q490 930 492 960" stroke="#cacace" stroke-width="12" fill="none" filter="url(#b4)"/>
<path d="M583 738 Q550 745 523 790 Q520 840 530 900 Q545 940 560 950 L575 860 L583 780Z" fill="#f3f3f4" filter="url(#b2)"/>
<path d="M581 742 Q548 748 524 790" stroke="#fafafa" stroke-width="3" fill="none" filter="url(#b1)"/>
<path d="M518 800 Q506 860 512 930" stroke="#d2d2d6" stroke-width="6" fill="none" filter="url(#b4)"/>
<ellipse cx="532" cy="962" rx="22" ry="22" fill="#f6f6f7" filter="url(#b4)"/>
<path d="M498 960 Q496 985 497 1002" stroke="#c6c6ca" stroke-width="5" fill="none" filter="url(#b2)"/>
</g>
<path d="M446 716 Q455 738 460.500 744 Q466 738 475 716Z" fill="#dadadd" filter="url(#b2)"/>
<path d="M455.500 747 L465 747" stroke="#c0c0c4" stroke-width="1.2"/>
<path d="M337 714 Q460 728 584 719 L584 740 Q460 748 337 735Z" fill="#b4b4b9" opacity="0.45" filter="url(#b2)"/>
<clipPath id="cLH"><path d="M75.500 566 L105 587.500 Q88 600 81.500 611.500 Q84 622 80 633 Q72 650 65.500 665 Q60 690 48 700.500 Q40 700 40 691 Q40 676 42.500 665 L38 670 L35 668 L35 622 Q44 606 53 593.500 Q63 580 75.500 566Z"/></clipPath><clipPath id="cRH"><path d="M849 574 L821.500 591.500 Q836 603 840 615 Q839 628 844 640 Q851 658 860 674 Q866 694 874 698.500 Q883 698 882 686 L879 668 L885 676 L885 618 Q876 600 866 588 Q858 580 849 574Z"/></clipPath>
<path d="M75.500 566 L105 587.500 Q88 600 81.500 611.500 Q84 622 80 633 Q72 650 65.500 665 Q60 690 48 700.500 Q40 700 40 691 Q40 676 42.500 665 L38 670 L35 668 L35 622 Q44 606 53 593.500 Q63 580 75.500 566Z" fill="#f6f6f7"/><g clip-path="url(#cLH)"><path d="M105 587.500 Q88 600 81.500 611.500 Q84 622 80 633 Q72 650 65.500 665 Q60 690 48 700.500 Q40 700 40 691" fill="none" stroke="#9d9da3" stroke-width="5" filter="url(#b2)"/><path d="M75.500 566 Q63 580 53 593.500 Q44 606 35 622" fill="none" stroke="#c6c6cb" stroke-width="3" filter="url(#b1)"/><path d="M43.500 640 Q41.500 655 42.500 668 L38 671" stroke="#a9a9ae" stroke-width="1.600" fill="none" filter="url(#b1)"/><path d="M77 570 L103 589" stroke="#b4b4b9" stroke-width="5" fill="none" filter="url(#b2)"/><path d="M62 600 Q56 625 52 660" stroke="#e6e6e9" stroke-width="6" fill="none" filter="url(#b2)"/></g>
<path d="M849 574 L821.500 591.500 Q836 603 840 615 Q839 628 844 640 Q851 658 860 674 Q866 694 874 698.500 Q883 698 882 686 L879 668 L885 676 L885 618 Q876 600 866 588 Q858 580 849 574Z" fill="#f6f6f7"/><g clip-path="url(#cRH)"><path d="M821.500 591.500 Q836 603 840 615 Q839 628 844 640 Q851 658 860 674 Q866 694 874 698.500 Q883 698 882 686" fill="none" stroke="#9d9da3" stroke-width="5" filter="url(#b2)"/><path d="M869 640 Q875 660 879 668 L885 680" fill="none" stroke="#a9a9ae" stroke-width="1.600" filter="url(#b1)"/><path d="M847 576 L823 591" stroke="#b4b4b9" stroke-width="5" fill="none" filter="url(#b2)"/><path d="M858 600 Q864 625 868 660" stroke="#e6e6e9" stroke-width="6" fill="none" filter="url(#b2)"/></g>
<path d="M320 242 L313 244 Q308 247 304.8 251 L293.7 267 L281 287.6 L268.3 306.6 L255.6 322.5 L249.3 333.6 L236.6 347.8 L222.3 365.3 L202.7 386 L174.2 420.4 L150.4 453.7 L119.5 494.2 L93.3 527.5 L76.7 551.3 L71.4 562 L129 601.2 L155.1 567.9 L178.9 534.6 L202.7 503.7 L226.5 475.1 L250.3 449 L274.1 422.8 L297.9 396.7 L309.8 382.4 L313.5 379 L320 379 Z" fill="#2c2c2c"/>
<g clip-path="url(#cLS)">
<path d="M316 243 L40 600 L150 630 L330 380Z" fill="url(#slL)"/>
<path d="M304 270 L258 338 L210 392" stroke="#565656" stroke-width="8" fill="none" filter="url(#b4)"/>
<path d="M300 330 L262 385 L230 425" stroke="#222" stroke-width="7" fill="none" filter="url(#b4)"/>
<path d="M236 420 Q205 440 178 482 Q160 510 140 540" stroke="#505050" stroke-width="7" fill="none" filter="url(#b4)"/>
<path d="M225 455 Q195 490 165 540" stroke="#222" stroke-width="6" fill="none" filter="url(#b4)"/>
<path d="M312 250 L309 380" stroke="#505050" stroke-width="4" fill="none" filter="url(#b2)"/>
<path d="M76 551 L134 592" stroke="#444" stroke-width="1.200" fill="none"/>
<path d="M71 562 L129.500 601.500" stroke="#141414" stroke-width="3" fill="none" filter="url(#b1)"/>
</g>
<path d="M612 249 L616 250.3 L627 257.4 L639.6 274.9 L652.3 297.1 L663.4 316.1 L671.4 330.4 L685.6 344.7 L695.1 360.5 L707.8 379.5 L712.3 384.8 L724.2 403.8 L743.2 418.1 L762.2 441.8 L781.3 468 L800.3 494.2 L824.1 525.1 L843.1 548.9 L856.2 565.5 L795.5 608.8 L776.5 582.2 L752.7 551.3 L728.9 522.7 L705.1 494.2 L681.4 465.6 L657.6 439.5 L633.8 413.3 L621.9 401.4 L619.5 398 L612 398 Z" fill="#262626"/>
<g clip-path="url(#cRS)">
<path d="M617 251 L880 590 L780 630 L600 403Z" fill="url(#slR)"/>
<path d="M640 300 L680 372 L722 432" stroke="#1c1c1c" stroke-width="8" fill="none" filter="url(#b4)"/>
<path d="M650 290 Q672 320 690 350" stroke="#484848" stroke-width="7" fill="none" filter="url(#b4)"/>
<path d="M668 368 Q700 392 730 430 Q745 450 760 470" stroke="#4a4a4a" stroke-width="7" fill="none" filter="url(#b4)"/>
<path d="M700 440 Q740 490 790 560" stroke="#1c1c1c" stroke-width="8" fill="none" filter="url(#b4)"/>
<path d="M850 557 L789 600" stroke="#3a3a3a" stroke-width="1.200" fill="none"/>
</g>
<path d="M218 368 Q222 367.500 226 370 L286 402.500 L272 419.500 Q268 420.500 262 417.500 L202.700 386Z" fill="#f1f1f1" stroke="#cfcfcf" stroke-width="0.800"/>
<path d="M215 376 L279 411" stroke="#dedede" stroke-width="3" fill="none" filter="url(#b1)"/>
<path d="M781.300 469.200 Q787 470.500 791 476 L843.100 548.900 L814.500 560.500 Q808.500 560.500 805.500 555.500 L767.500 493 Q764 487 766.500 483.500Z" fill="#f7f7f7" stroke="#cfcfcf" stroke-width="0.800"/>
<path d="M772 486 L811 552" stroke="#e2e2e2" stroke-width="3" fill="none" filter="url(#b1)"/>
<path d="M317 244 Q362 221 412 208 Q404 219 414 236 Q428 250 457 257 L474 255 L477 252.5 L503 254 Q517 248 524 233 Q523 219 511 213 Q565 228 617 251 L619 328 L620 372 L624.5 375 L625 404 L620 405 L619 440 L617.5 489 L618 522 L613.5 527 L611 640 L610.5 703 Q608 716 600 717.5 Q575 723 548 723 Q505 720 468 714.5 L462.5 710 L451 714.5 Q410 718 376 717.5 Q330 714 300 708.5 Q298 703 298.6 698 L301.5 627 L307 518 L303 513.5 L303 483 L310 480 L310.5 440 L313 379 Z" fill="url(#blueH)"/>
<g clip-path="url(#cBody)">
<rect x="290" y="200" width="345" height="530" fill="url(#blueV)"/>
<ellipse cx="352" cy="330" rx="22" ry="90" fill="#182c40" opacity="0.5" filter="url(#b8)"/>
<ellipse cx="420" cy="400" rx="22" ry="80" fill="#38566f" opacity="0.6" filter="url(#b8)"/>
<ellipse cx="575" cy="322" rx="46" ry="28" fill="#3d5d7b" opacity="0.8" filter="url(#b8)"/>
<ellipse cx="505" cy="420" rx="14" ry="150" fill="#30485f" opacity="0.5" filter="url(#b8)"/>
<ellipse cx="600" cy="440" rx="18" ry="50" fill="#182c40" opacity="0.4" filter="url(#b8)"/>
<ellipse cx="530" cy="600" rx="12" ry="100" fill="#1a3046" opacity="0.45" filter="url(#b8)"/>
<ellipse cx="368" cy="665" rx="18" ry="50" fill="#3a5a78" opacity="0.8" filter="url(#b8)"/>
<ellipse cx="320" cy="650" rx="12" ry="60" fill="#182c40" opacity="0.4" filter="url(#b8)"/>
<ellipse cx="440" cy="620" rx="14" ry="80" fill="#3a5a78" opacity="0.7" filter="url(#b8)"/>
<ellipse cx="503" cy="600" rx="13" ry="110" fill="#36546f" opacity="0.65" filter="url(#b8)"/>
<ellipse cx="585" cy="670" rx="20" ry="40" fill="#2f4a64" opacity="0.5" filter="url(#b8)"/>
<rect x="290" y="200" width="345" height="530" fill="url(#weave)"/>
<path d="M299 700 Q330 706 376 709 Q420 710 461 702 M470 706 Q510 713 548 714 Q585 714 611 696" fill="none" stroke="#172e42" stroke-width="1.3" opacity="0.8"/>
</g>
<path d="M316.5 246 L313 379" stroke="#182c3e" stroke-width="1.5" fill="none" opacity="0.8"/><path d="M618 253 L620 372" stroke="#182c3e" stroke-width="1.5" fill="none" opacity="0.8"/>
<path d="M362 230 L385 219.5 Q376 280 366 355 L346 356.5 Q344 320 352 276 Q356 250 362 230Z" fill="#f3f3f3" stroke="#bfc3c8" stroke-width="0.8"/>
<path d="M366 236 Q358 290 352 350" stroke="#dcdcdc" stroke-width="4" fill="none" filter="url(#b1)"/>
<path d="M522.5 241.5 Q536 248 549 252 L577.5 257.5 L617.5 268 L617.5 292 L577 279 Q556 275 543 270.5 Q524 262 512.5 250.5 Q519 247 522.5 241.5Z" fill="#f5f5f5" stroke="#bfc3c8" stroke-width="0.8"/>
<path d="M520 250 Q545 267 580 276 L616 288" stroke="#e0e0e0" stroke-width="3" fill="none" filter="url(#b1)"/>
<path d="M364 233 Q355 285 349 353 L364 352" fill="none" stroke="#b9bcc0" stroke-width="0.700"/><path d="M382.500 223 Q374 282 364.500 352" fill="none" stroke="#c4c7ca" stroke-width="0.700"/>
<path d="M514.500 251.500 Q530 263.500 548 270 L577 277 L616 289.500" fill="none" stroke="#b9bcc0" stroke-width="0.700"/><path d="M523 243.500 Q538 250.500 550 254 L578 259.500 L616 269.500" fill="none" stroke="#c9ccd0" stroke-width="0.700"/>
<path d="M207 384.500 L264 415.500 L270.500 417" fill="none" stroke="#b9bcc0" stroke-width="0.700"/><path d="M769 490 L807 553 Q809.500 557 814 557.500 L840 547.500" fill="none" stroke="#b9bcc0" stroke-width="0.700"/>
<path d="M553 398 L551.5 454 Q552 458 556 458.5 L603 461.5 Q607 461 607.5 457 L618 404" fill="#253d55" stroke="#16293a" stroke-width="1.3"/>
<path d="M547.5 366 L623.5 374 L625 404 Q590 402 556 398.5 Q548 397 548 392Z" fill="#27405a" stroke="#16293a" stroke-width="1.3"/>
<path d="M549 368 L622 376" stroke="#37506a" stroke-width="1.2" fill="none"/>
<path d="M553 402 Q590 407 624 408" stroke="#15283a" stroke-width="3" fill="none" filter="url(#b1)" opacity="0.6"/>
<path d="M548 512 L537 615 Q537 620 542 621 L600 625 Q605 625 606 620 L613 526" fill="#253e55" stroke="#16293a" stroke-width="1.3"/>
<path d="M546 481.5 L617.5 489.5 L618 522 Q585 519 555 513 Q549 511 548.5 506Z" fill="#27405a" stroke="#16293a" stroke-width="1.3"/>
<path d="M547.5 483.5 L616 491.5" stroke="#37506a" stroke-width="1.2" fill="none"/>
<path d="M550 516 Q585 524 617 526" stroke="#15283a" stroke-width="3" fill="none" filter="url(#b1)" opacity="0.6"/>
<path d="M326 444 L408 440.5 L408 451.5 L326 454.5Z" fill="#213a50" stroke="#16293a" stroke-width="1.2"/><path d="M327 446 L407 442.5" stroke="#37506a" stroke-width="1" fill="none"/>
<path d="M311.5 514 L311.5 611 Q312 615 316 615.5 L385 618 Q389 618 389 614 L389 513" fill="#243c53" stroke="#16293a" stroke-width="1.3"/>
<path d="M303 483 L389 483 L389 511 Q389 513.5 386 513.5 L306 513.5 Q303 513 303 510Z" fill="#27405a" stroke="#16293a" stroke-width="1.3"/>
<path d="M304.5 485 L388 485" stroke="#37506a" stroke-width="1.2" fill="none"/>
<path d="M306 517 L389 517" stroke="#15283a" stroke-width="3" fill="none" filter="url(#b1)" opacity="0.6"/>
<path d="M404 475 L421 475 L425 621 L410 621Z" fill="#1f374d" stroke="#16293a" stroke-width="1"/>
<path d="M410 478 L418.5 478 L423 620 L411.5 620Z" fill="#161616"/>
<path d="M409 479 L413 479 L409 508 L405 507Z" fill="#2a2a2a"/><path d="M404.400 506 L408.400 506 L405.500 555 Q400 590 393 604 L389 620.500 Q388 590 392.600 555Z" fill="#94989b"/><path d="M404 512 L394 580 M406.500 512 L399 580 M401 530 L391 606" stroke="#c4c7ca" stroke-width="1.300" fill="none" stroke-dasharray="1.200 1.400"/><path d="M403 520 L392 600" stroke="#6e7275" stroke-width="1" fill="none" stroke-dasharray="1 2"/>
<path d="M473 255 L477.500 252.500 L481.500 300 L484 360 L485.500 400 L484.500 462 L481 515 L474 560 L471.500 580 L467 640 L463.500 684 L460.500 706 L456.500 706 L459 670 L461 620 L461.500 560 L460 500 L459.500 440 L460 400 L463 334 L468 280Z" fill="#1d2024"/>
<path d="M475 262 L479 305 L480.500 400 L479 462 L475.500 515 L471 560 L468.500 515 L467 462 L467 400 L469.500 305Z" fill="#f1f1f3"/>
<path d="M476 300 L478.500 400 L477 462 L473 530" stroke="#d9d9dc" stroke-width="3" fill="none" filter="url(#b1)"/>
<path d="M480.500 400 L479 462 L475.500 515 L471 560 L474 560 L481 515 L484.500 462 L485.500 400Z" fill="#34383c"/>
<path d="M463.500 330 L461 400 L461 500 L463.500 580" stroke="#3a3f45" stroke-width="2.200" fill="none" stroke-dasharray="1.200 1.200"/>
<path d="M469 590 Q466 650 460 704" stroke="#3e4348" stroke-width="1.400" fill="none" stroke-dasharray="1.200 1.200"/>
<path d="M459.5 702 L462.5 702 L461 716 L458 716Z" fill="#1a1a1a"/><rect x="455" y="716" width="5.5" height="8.5" fill="none" stroke="#222" stroke-width="1.4"/>
<path d="M412 208 Q404 219 414 236 Q428 250 457 257 L474 255" fill="none" stroke="#1a3247" stroke-width="1.6"/><path d="M503 254 Q517 248 524 233 Q523 219 511 213" fill="none" stroke="#1a3247" stroke-width="1.6"/>
<path d="M412 208 Q408 212 406.5 217 L404 213 Z" fill="#1c3449"/>
<path d="M712 841 L712 855 L716.5 851.5 L722 850Z" fill="#d8d8da" stroke="#9a9a9e" stroke-width="0.8"/>
<g transform="translate(733 860.500)"><path d="M0-5v10M-5 0h10" stroke="#6e6e73" stroke-width="3.400"/><path d="M0-8.500l-3.600 4h7.200zM0 8.500l-3.600-4h7.200zM-8.500 0l4-3.600v7.200zM8.500 0l-4-3.600v7.200z" fill="#6e6e73"/><path d="M0-5v10M-5 0h10" stroke="#dedee2" stroke-width="1.600"/><path d="M0-7l-2 2.300h4zM0 7l-2-2.300h4zM-7 0l2.300-2v4zM7 0l-2.300-2v4z" fill="#dedee2"/></g>
</svg>
<div class="abs" style="left:45px;top:134px;width:27px;height:27px;background:rgba(255,255,255,0.17);border:1px solid rgba(70,70,76,0.45);border-radius:2px"></div>
<div class="abs" style="left:45px;top:163px;width:27px;height:27px;background:rgba(255,255,255,0.17);border:1px solid rgba(70,70,76,0.45);border-radius:2px"></div>
<div class="abs" style="left:45px;top:201px;width:27px;height:27px;background:rgba(255,255,255,0.17);border:1px solid rgba(70,70,76,0.45);border-radius:2px"></div>
<div class="abs" style="left:45px;top:230px;width:27px;height:27px;background:rgba(255,255,255,0.17);border:1px solid rgba(70,70,76,0.45);border-radius:2px"></div>
<div class="abs" style="left:45px;top:259px;width:27px;height:27px;background:rgba(255,255,255,0.17);border:1px solid rgba(70,70,76,0.45);border-radius:2px"></div>
<div class="abs" style="left:45px;top:288px;width:27px;height:27px;background:rgba(255,255,255,0.17);border:1px solid rgba(40,40,46,0.75);border-radius:2px"></div>
<div class="abs" style="left:45px;top:317px;width:27px;height:27px;background:rgba(255,255,255,0.17);border:1px solid rgba(70,70,76,0.45);border-radius:2px"></div>
<div class="abs" style="left:45px;top:346px;width:27px;height:27px;background:rgba(255,255,255,0.17);border:1px solid rgba(40,40,46,0.75);border-radius:2px"></div>
<div class="abs" style="left:45px;top:375px;width:27px;height:27px;background:rgba(255,255,255,0.17);border:1px solid rgba(70,70,76,0.45);border-radius:2px"></div>
<svg class="abs" style="left:45px;top:134px" width="27" height="270" viewBox="45 134 27 270"><defs><linearGradient id="sg1" x1="0" y1="0" x2="1" y2="1"><stop offset="0" stop-color="#2e2e2e"/><stop offset="1" stop-color="#a0a0a0"/></linearGradient><radialGradient id="sg2" cx="0.4" cy="0.35" r="0.7"><stop offset="0" stop-color="#ffd2a0"/><stop offset="1" stop-color="#f09a50"/></radialGradient><radialGradient id="sg3" cx="0.4" cy="0.35" r="0.7"><stop offset="0" stop-color="#6fb6f5"/><stop offset="1" stop-color="#1f5fc0"/></radialGradient></defs><path d="M56 147l5-6h9v9l-5 5h-9z" fill="#d6d6d8"/><path d="M61 141v9h-5M61 150l4 5" stroke="#a8a8aa" stroke-width="0.800" fill="none"/><path d="M65 155l5-5v3l-5 5z" fill="#8c8c8e"/><path d="M49 151h8v4h6v4h-14z" fill="#4c4c4e"/><path d="M49 151h8v1.500h-8zM57 155h6v1.500h-6z" fill="#e0e0e0"/><path d="M54.500 168q4 3 8 0l6 3-2.500 4.500-2-1v10h-11v-10l-2 1-2.500-4.500z" fill="#b0b0b2" stroke="#707074" stroke-width="1"/><rect x="56.500" y="174" width="4" height="4" fill="none" stroke="#707074" stroke-width="0.800"/><path d="M53 181h11" stroke="#707074" stroke-width="0.800"/><circle cx="49.500" cy="185.500" r="1.800" fill="#e8e8e8"/><path d="M55 205q4 3 8 0l6 3-2.500 4.500-2-1v10h-11v-10l-2 1-2.500-4.500z" fill="#f0f0f0"/><path d="M59 212v10" stroke="#d0d0d0" stroke-width="2"/><path d="M48.5 222q4.500-4 9 0q-4.500 4-9 0z" fill="#f4f4f4" stroke="#1c1c1c" stroke-width="0.900"/><circle cx="53" cy="222" r="1.700" fill="#1c1c1c"/><path d="M57 252l4-9 4 3 3-3v12h-11z" fill="#ececec"/><circle cx="54.500" cy="241" r="3" fill="#2aa5e8"/><path d="M57 240l10-6" stroke="#555" stroke-width="1.600"/><path d="M48.5 252q4.500-4 9 0q-4.500 4-9 0z" fill="#f4f4f4" stroke="#1c1c1c" stroke-width="0.900"/><circle cx="53" cy="252" r="1.700" fill="#1c1c1c"/><ellipse cx="60.500" cy="266.500" rx="3.200" ry="4" fill="#f2f2f2"/><path d="M53 284q0-9 5-11l2.500 1 2.500-1q5 2 5 11z" fill="#e8e8e8"/><path d="M48.0 281q4.500-4 9 0q-4.500 4-9 0z" fill="#f4f4f4" stroke="#1c1c1c" stroke-width="0.900"/><circle cx="52.5" cy="281" r="1.700" fill="#1c1c1c"/><path d="M54 296l12-4 4 2-2 12-5 3-9-1z" fill="#2f86e0"/><path d="M54 296l12-4 1 4-12 4z" fill="#58a8f2"/><path d="M51 306q0-3 4-3h8q3 0 3 3t-3 3h-9" fill="none" stroke="#fff" stroke-width="1.800"/><path d="M71 313v-4l-4 4z" fill="#4a4a4c"/><path d="M50 328q4-5 8-5l10-1q-1 6-3 10t-6 5l-8-1q2-4-1-8z" fill="url(#sg1)"/><path d="M52 371.500q0-6 5-7q-3-3-2-8q2-5 6-5q6 1 6 7q0 4-2 6q5 2 5 7z" fill="url(#sg2)" stroke="#c98a4a" stroke-width="0.700"/><path d="M71 371v-4l-4 4z" fill="#4a4a4c"/><circle cx="61" cy="387" r="8.500" fill="url(#sg3)"/><path d="M52.500 387h17M61 378.500v17M54.500 382q6.500 2.500 13 0M54.500 392q6.500-2.500 13 0M61 378.500q-6 8.500 0 17M61 378.500q6 8.500 0 17M61 378.500q-2.500 8.500 0 17" stroke="#d9ecff" stroke-width="0.700" fill="none"/><path d="M48.0 396q4.500-4 9 0q-4.500 4-9 0z" fill="#f4f4f4" stroke="#1c1c1c" stroke-width="0.900"/><circle cx="52.5" cy="396" r="1.700" fill="#1c1c1c"/></svg>
<svg class="abs" style="left:893px;top:124px" width="577" height="879" viewBox="893 124 577 879">
<defs><pattern id="grid" x="1226" y="660" width="13.9" height="13.9" patternUnits="userSpaceOnUse"><path d="M7.450 0V13.900M0 7.450H13.900" stroke="#c6c6c6" stroke-width="1" fill="none"/><path d="M0.500 0V13.900M0 0.500H13.900" stroke="#c1c1c1" stroke-width="1" fill="none"/></pattern><filter id="pb" color-interpolation-filters="sRGB"><feGaussianBlur stdDeviation="0.6"/></filter><filter id="pb2" color-interpolation-filters="sRGB"><feGaussianBlur stdDeviation="1.5"/></filter></defs>
<rect x="893" y="124" width="577" height="879" fill="#c9c9c9"/><rect x="893" y="124" width="577" height="879" fill="url(#grid)"/>
<path d="M1226.5 124V1003" stroke="#9c9c9c" stroke-width="1.4"/><path d="M893 660.2H1470" stroke="#a6a6a6" stroke-width="1.2"/>
<g fill="#b4b4b4" opacity="0.5" filter="url(#pb2)"><ellipse cx="1226.500" cy="405" rx="6" ry="7.500"/><path d="M1223 411 L1230 411 L1231 417 Q1240 419 1246 423 Q1250 440 1252 470 L1255 520 L1250 522 L1245 470 L1243 455 Q1242 480 1245 510 Q1250 545 1250 575 L1246 640 L1238 640 L1233 585 L1227.500 548 L1225.500 548 L1221 585 L1215 640 L1207 640 L1204 575 Q1204 545 1208 510 Q1211 480 1210 455 L1208 470 L1203 522 L1198 520 L1201 470 Q1203 440 1207 423 Q1213 419 1222 417Z"/></g>
<g filter="url(#pb)"><path d="M1182 377.5H1274.5M1182 400H1274.5" fill="none" stroke="#5f8dbb" stroke-width="1.2" stroke-linejoin="round" /><path d="M1001.500 541.500L1023.500 537.500" fill="none" stroke="#86a9cc" stroke-width="1.5" stroke-linejoin="round" /><path d="M1063 536H1386" fill="none" stroke="#7d9fc2" stroke-width="1.2" stroke-linejoin="round" opacity="0.8"/><path d="M1135 644H1320M1135 648H1320" fill="none" stroke="#7ea6cf" stroke-width="1.2" stroke-linejoin="round" opacity="0.7"/><rect x="965.5" y="382.0" width="5.5" height="34.5" fill="#4a4a4c" stroke="#1a1a1a" stroke-width="1.2" /><rect x="967.6" y="395.0" width="1.2" height="15.0" fill="#111" /><path d="M962 385 Q975 390 984 396" fill="none" stroke="#8f95c8" stroke-width="1" stroke-dasharray="1.8 1.8"/><path d="M1014.500 388.500l3 1.500h6l3-1.500v5.500l-3-1.500h-6l-3 1.500z" fill="#111" /><path d="M1001.500 398.500 Q1007 402 1010 399.500 Q1019.500 404 1029 399.500 Q1033 402 1038.300 398.500 Q1033 414 1019.500 416.500 Q1006 414 1001.500 398.500Z" fill="#0d3b59" stroke="#8b1fa8" stroke-width="1.8" stroke-linejoin="round" /><rect x="1013.5" y="406.0" width="4.0" height="4.5" fill="none" stroke="#c0392b" stroke-width="1.2" /><rect x="1021.0" y="406.0" width="4.0" height="4.5" fill="none" stroke="#c0392b" stroke-width="1.2" /><path d="M1017.500 408.200h3.500" fill="none" stroke="#c0392b" stroke-width="1.2" stroke-linejoin="round" /><path d="M968.8 433.3 L976.0 431.0 L987.7 427.4 L1002.5 430.4 L1002.5 532.6 L962.9 533.4 L964.9 469.0 L969.5 461.0 L971.8 452.0 L970.8 439.3Z" fill="#0d3b59" stroke="#14222c" stroke-width="0.8" stroke-linejoin="round" /><circle cx="968.8" cy="433.3" r="1.9" fill="#8b1fa8"/><circle cx="973.0" cy="431.8" r="1.9" fill="#8b1fa8"/><circle cx="978.0" cy="430.0" r="1.9" fill="#8b1fa8"/><circle cx="983.0" cy="428.5" r="1.9" fill="#8b1fa8"/><circle cx="987.7" cy="427.4" r="1.9" fill="#8b1fa8"/><path d="M982.500 431.500V449.500M986 431.500V449.500" fill="none" stroke="#c0392b" stroke-width="1" stroke-linejoin="round" /><path d="M981 450h7" fill="none" stroke="#c0392b" stroke-width="1.4" stroke-linejoin="round" /><path d="M986 429 Q990 442 1002 444" fill="none" stroke="#cfcfee" stroke-width="1.1" stroke-dasharray="2.2 1.6"/><path d="M965 483.500H1002" fill="none" stroke="#cfcfee" stroke-width="1.1" stroke-dasharray="2.2 1.6"/><path d="M964.500 530.500H1002" fill="none" stroke="#cfcfee" stroke-width="1.2" stroke-dasharray="2.2 1.6"/><rect x="963.5" y="538.5" width="37.0" height="3.0" fill="#7fb5e4" /><rect x="962.0" y="542.3" width="39.5" height="5.0" fill="#0d3b59" stroke="#14222c" stroke-width="0.6" /><rect x="964.0" y="548.0" width="35.5" height="3.0" fill="#7fb5e4" /><path d="M978 544l6 1.500" fill="none" stroke="#cfd6e0" stroke-width="0.9" stroke-linejoin="round" /><rect x="1021.0" y="535.0" width="45.0" height="8.5" fill="#7fb5e4" /><path d="M1023.3 429.4 L1037.2 425.4 L1056.0 431.3 L1053.2 443.2 L1055.0 459.0 L1061.0 468.0 L1063.0 538.4 L1023.7 538.4Z" fill="#0d3b59" stroke="#14222c" stroke-width="0.8" stroke-linejoin="round" /><circle cx="1037.2" cy="425.4" r="1.9" fill="#8b1fa8"/><circle cx="1042.0" cy="427.0" r="1.9" fill="#8b1fa8"/><circle cx="1046.5" cy="428.5" r="1.9" fill="#8b1fa8"/><circle cx="1051.0" cy="430.0" r="1.9" fill="#8b1fa8"/><circle cx="1056.0" cy="431.3" r="1.9" fill="#8b1fa8"/><path d="M1024 438 Q1036 440 1041 427" fill="none" stroke="#cfcfee" stroke-width="1.1" stroke-dasharray="2.2 1.6"/><path d="M1024 482H1061.500" fill="none" stroke="#cfcfee" stroke-width="1.1" stroke-dasharray="2.2 1.6"/><path d="M1024 529H1062.500" fill="none" stroke="#cfcfee" stroke-width="1.2" stroke-dasharray="2.2 1.6"/><path d="M1024 534.500H1063" fill="none" stroke="#dfe6f2" stroke-width="1.2" stroke-linejoin="round" /><path d="M1040 541l6-1.500" fill="none" stroke="#cfd6e0" stroke-width="0.9" stroke-linejoin="round" /><path d="M1075.8 468.0 L1083.0 466.0 L1092.0 459.0 L1099.6 451.2 L1100.6 471.0 L1097.0 500.0 L1092.7 524.5 L1076.8 524.5 L1080.8 498.7 L1079.0 480.0Z" fill="#1d1d1f" stroke="#8b1fa8" stroke-width="1.8" stroke-linejoin="round" /><circle cx="1075.8" cy="468.0" r="1.8" fill="#8b1fa8"/><circle cx="1080.0" cy="467.5" r="1.8" fill="#8b1fa8"/><circle cx="1099.6" cy="451.2" r="1.8" fill="#8b1fa8"/><path d="M1088 468V524M1081 468.500H1100" fill="none" stroke="#cfcfee" stroke-width="1.1" stroke-dasharray="2.2 1.6"/><rect x="1075.5" y="525.0" width="19.5" height="4.0" fill="#8b1fa8" /><path d="M1076 524.500H1094" fill="none" stroke="#c0392b" stroke-width="1" stroke-linejoin="round" /><path d="M1075.0 530.0 L1094.0 528.5 L1094.5 534.5 L1075.5 536.0Z" fill="#7fb5e4" /><path d="M1076.8 529.8 L1092.7 528.8 L1093.0 533.5 L1077.0 534.5Z" fill="#15171a" /><path d="M1103.6 452.2 L1110.0 448.0 L1117.5 445.2 L1125.0 448.5 L1133.0 458.0 L1141.2 467.0 L1141.0 500.0 L1140.2 522.5 L1114.5 524.5 L1109.0 498.0 L1106.6 478.9Z" fill="#1d1d1f" stroke="#8b1fa8" stroke-width="1.8" stroke-linejoin="round" /><circle cx="1103.6" cy="452.2" r="1.8" fill="#8b1fa8"/><circle cx="1117.5" cy="445.2" r="1.8" fill="#8b1fa8"/><circle cx="1141.2" cy="467.0" r="1.8" fill="#8b1fa8"/><circle cx="1138.0" cy="464.0" r="1.8" fill="#8b1fa8"/><path d="M1117.500 446V524M1104.500 468.500H1141" fill="none" stroke="#cfcfee" stroke-width="1.1" stroke-dasharray="2.2 1.6"/><path d="M1133 458 Q1136 476 1135.500 492 L1137 507" fill="none" stroke="#b9b9e6" stroke-width="1" stroke-dasharray="2.2 1.6"/><path d="M1105.500 478 L1141.500 473.500M1106 482 L1141.500 477.500" fill="none" stroke="#8b1fa8" stroke-width="1.6" stroke-linejoin="round" /><rect x="1112.5" y="524.5" width="30.0" height="4.5" fill="#8b1fa8" /><path d="M1114 524.500H1140.500" fill="none" stroke="#c0392b" stroke-width="1" stroke-linejoin="round" /><path d="M1113.0 531.0 L1141.5 528.5 L1142.0 535.0 L1113.5 537.5Z" fill="#7fb5e4" /><path d="M1114.5 530.3 L1140.5 528.4 L1141.0 533.6 L1115.0 535.6Z" fill="#15171a" /><path d="M1101.6 430.6 L1138.3 427.4 L1138.8 432.6 L1102.1 436.0Z" fill="#fff" stroke="#b4127c" stroke-width="1.6" stroke-linejoin="round" /><path d="M1147.3 419.8 L1152.2 419.2 L1152.8 452.6 L1147.8 453.2Z" fill="#fff" stroke="#b4127c" stroke-width="1.6" stroke-linejoin="round" /><path d="M1133.500 436 Q1131 448 1133 456" fill="none" stroke="#8f95c8" stroke-width="1" stroke-dasharray="1.8 1.8"/><path d="M1153.500 425 Q1158 440 1159.500 452" fill="none" stroke="#8f95c8" stroke-width="1" stroke-dasharray="1.8 1.8"/><path d="M1160.4 429.9 L1169.0 426.5 L1177.6 422.4 L1181.0 429.0 L1187.0 434.0 L1192.7 436.3 L1194.8 526.7 L1148.6 525.6 L1150.8 460.0 L1158.0 455.0 L1162.6 446.0 L1162.0 437.0Z" fill="#0d3b59" stroke="#8b1fa8" stroke-width="2" stroke-linejoin="round" /><circle cx="1160.4" cy="429.9" r="1.9" fill="#8b1fa8"/><circle cx="1165.0" cy="428.2" r="1.9" fill="#8b1fa8"/><circle cx="1177.6" cy="422.4" r="1.9" fill="#8b1fa8"/><circle cx="1192.7" cy="436.3" r="1.9" fill="#8b1fa8"/><circle cx="1150.8" cy="460.0" r="1.9" fill="#8b1fa8"/><circle cx="1194.8" cy="526.7" r="1.9" fill="#8b1fa8"/><path d="M1170.500 427V457M1174 426V457" fill="none" stroke="#c0392b" stroke-width="1" stroke-linejoin="round" /><path d="M1177.500 424 Q1182 440 1186 455 L1188.500 525" fill="none" stroke="#cfcfee" stroke-width="1.1" stroke-dasharray="2.2 1.6"/><path d="M1192 440V522" fill="none" stroke="#cfcfee" stroke-width="1.1" stroke-dasharray="2.2 1.6"/><path d="M1150.500 475H1193" fill="none" stroke="#cfcfee" stroke-width="1.1" stroke-dasharray="2.2 1.6"/><path d="M1163 458h19v8h-19z" fill="none" stroke="#cfcfee" stroke-width="1.1" stroke-dasharray="2.2 1.6"/><path d="M1164 462h17" fill="none" stroke="#cfcfee" stroke-width="1.3" stroke-dasharray="2 1.3"/><rect x="1163.7" y="473.2" width="20.8" height="5.0" fill="#8b1fa8" /><rect x="1158.5" y="479.5" width="27.7" height="28.9" fill="none" stroke="#8b1fa8" stroke-width="2.2" /><rect x="1182.5" y="480.0" width="4.0" height="26.0" fill="#8b1fa8" opacity="0.85"/><path d="M1161 485.500h18" fill="none" stroke="#cfcfee" stroke-width="1.3" stroke-dasharray="2 1.3"/><rect x="1148.0" y="524.5" width="48.0" height="3.8" fill="#8b1fa8" /><path d="M1149 524.500H1188" fill="none" stroke="#c0392b" stroke-width="1.1" stroke-linejoin="round" /><rect x="1147.5" y="533.0" width="33.5" height="3.5" fill="#7fb5e4" /><rect x="1148.6" y="528.8" width="31.2" height="4.4" fill="#0d3b59" stroke="#14222c" stroke-width="0.6" /><path d="M1162 531.500l7-1.200" fill="none" stroke="#cfd6e0" stroke-width="0.9" stroke-linejoin="round" /><rect x="1196.2" y="481.5" width="2.0" height="29.0" fill="#141414" /><rect x="1200.3" y="436.0" width="2.0" height="95.5" fill="#1a1a1a" /><rect x="1199.2" y="435.0" width="4.2" height="2.5" fill="#1a1a1a" /><rect x="1198.6" y="530.0" width="5.4" height="3.0" fill="#1a1a1a" /><rect x="1253.0" y="443.5" width="1.8" height="95.5" fill="#1a1a1a" /><rect x="1251.8" y="442.5" width="4.2" height="2.5" fill="#1a1a1a" /><rect x="1251.6" y="537.5" width="4.6" height="3.0" fill="#1a1a1a" /><path d="M1206.500 430 L1209 427.500 Q1214 441 1226 442.500 Q1240 441 1248 424 L1251.500 426 Q1248 445 1246.500 468 L1246.500 536.500 L1212 537.500 L1211.800 468 Q1210 446 1206.500 430Z" fill="#7fb5e4" /><path d="M1208.800 428.800 Q1210 436 1214 440 Q1219 445 1226 445 Q1236 444 1242 437 Q1247 431 1249.700 425.600 Q1246 446 1244.300 467.500 L1244.300 532 L1214.200 534.200 L1214.200 467.500 Q1212 446 1208.800 428.800Z" fill="#0d3b59" stroke="#14222c" stroke-width="0.6" stroke-linejoin="round" /><path d="M1209 429 Q1213 442.500 1226 443.500 Q1240 442 1249.500 426" fill="none" stroke="#7fb5e4" stroke-width="2.2" stroke-linejoin="round" /><circle cx="1208.8" cy="428.8" r="1.4" fill="#1c2a36"/><circle cx="1249.7" cy="425.6" r="1.4" fill="#1c2a36"/><rect x="1223.8" y="443.0" width="2.8" height="91.0" fill="#f3a6c8" /><rect x="1226.6" y="443.0" width="2.6" height="91.0" fill="#fff" /><rect x="1229.2" y="443.0" width="2.8" height="91.0" fill="#f3a6c8" /><rect x="1232.0" y="443.0" width="2.4" height="91.0" fill="#e77fb0" /><path d="M1224 443V534" fill="none" stroke="#b4127c" stroke-width="0.9" stroke-dasharray="1.2 1.2"/><path d="M1234.200 443V534" fill="none" stroke="#b4127c" stroke-width="0.9" stroke-dasharray="1.2 1.2"/><path d="M1215 481.500H1244" fill="none" stroke="#cfcfee" stroke-width="1.1" stroke-dasharray="2.2 1.6"/><circle cx="1207.8" cy="494.5" r="2.2" fill="#c0143c"/><rect x="1206.8" y="497.0" width="2.6" height="16.0" fill="#555" stroke="#222" stroke-width="0.6" /><rect x="1207.5" y="513.0" width="1.2" height="5.0" fill="#333" /><rect x="1261.8" y="443.5" width="3.4" height="88.5" fill="#f0a8c8" /><path d="M1262 444V532" fill="none" stroke="#b4127c" stroke-width="1" stroke-dasharray="1.2 1.2"/><path d="M1264.5 441.7 L1272.0 436.0 L1276.0 429.0 L1279.8 422.4 L1298.0 431.0 L1296.0 440.0 L1293.8 450.3 L1298.0 459.0 L1304.5 465.4 L1306.7 529.9 L1264.7 532.0Z" fill="#0d3b59" stroke="#8b1fa8" stroke-width="2" stroke-linejoin="round" /><path d="M1278.0 424.0 L1297.5 431.5 L1294.5 439.5 L1275.0 432.0Z" fill="#0d3b59" stroke="#b4127c" stroke-width="1.6" stroke-linejoin="round" /><rect x="1284.0" y="426.5" width="7.0" height="3.0" fill="#111" transform="rotate(21 1287 428)"/><path d="M1274.5 434.2 L1292.6 440.6 L1290.8 445.0 L1272.8 438.8Z" fill="#fff" stroke="#b4127c" stroke-width="1.5" stroke-linejoin="round" /><path d="M1274 436.800 L1291.500 443" fill="none" stroke="#d060a8" stroke-width="0.8" stroke-linejoin="round" /><circle cx="1261.5" cy="441.7" r="1.9" fill="#8b1fa8"/><circle cx="1279.8" cy="422.4" r="1.9" fill="#8b1fa8"/><circle cx="1298.0" cy="431.0" r="1.9" fill="#8b1fa8"/><circle cx="1304.5" cy="465.4" r="1.9" fill="#8b1fa8"/><circle cx="1293.8" cy="450.3" r="1.9" fill="#8b1fa8"/><path d="M1278 440 Q1275 452 1274.500 470 L1274.500 530" fill="none" stroke="#cfcfee" stroke-width="1.1" stroke-dasharray="2.2 1.6"/><path d="M1266 481H1306" fill="none" stroke="#cfcfee" stroke-width="1.1" stroke-dasharray="2.2 1.6"/><rect x="1274.4" y="464.3" width="19.4" height="18.3" fill="none" stroke="#c0392b" stroke-width="1.3" /><path d="M1277 470.500h14" fill="none" stroke="#cfcfee" stroke-width="1.3" stroke-dasharray="2 1.3"/><rect x="1275.5" y="487.0" width="22.5" height="26.8" fill="none" stroke="#c0392b" stroke-width="1.3" /><path d="M1278 493.500h17" fill="none" stroke="#cfcfee" stroke-width="1.3" stroke-dasharray="2 1.3"/><rect x="1262.0" y="528.5" width="46.0" height="4.5" fill="#8b1fa8" /><path d="M1266 529H1305" fill="none" stroke="#c0392b" stroke-width="1" stroke-linejoin="round" /><rect x="1273.0" y="534.0" width="35.0" height="9.0" fill="#7fb5e4" /><rect x="1274.4" y="534.2" width="32.3" height="6.2" fill="#0d3b59" stroke="#14222c" stroke-width="0.6" /><path d="M1285 537l7 1.500" fill="none" stroke="#cfd6e0" stroke-width="0.9" stroke-linejoin="round" /><path d="M1313.0 471.8 L1316.0 465.0 L1323.0 456.0 L1330.0 451.0 L1336.8 449.2 L1343.0 451.0 L1349.7 456.8 L1348.5 480.0 L1347.0 505.0 L1343.5 527.7 L1314.2 527.7 L1314.5 500.0Z" fill="#1d1d1f" stroke="#8b1fa8" stroke-width="1.8" stroke-linejoin="round" /><circle cx="1313.0" cy="471.8" r="1.8" fill="#8b1fa8"/><circle cx="1336.8" cy="449.2" r="1.8" fill="#8b1fa8"/><circle cx="1349.7" cy="456.8" r="1.8" fill="#8b1fa8"/><path d="M1336.800 450V527M1314 472.500H1349" fill="none" stroke="#cfcfee" stroke-width="1.1" stroke-dasharray="2.2 1.6"/><path d="M1316.500 484 Q1318 496 1317.500 512" fill="none" stroke="#b9b9e6" stroke-width="1" stroke-dasharray="2.2 1.6"/><path d="M1325 508 Q1325.500 506.500 1327.500 506.500 L1337 506.500 Q1340 507 1340 510 L1339 524 Q1338.500 526.500 1336 526.500 L1327 526.500 Q1323.500 526 1323.500 523Z" fill="none" stroke="#8b1fa8" stroke-width="2.2" stroke-linejoin="round" /><rect x="1312.5" y="527.0" width="33.0" height="5.0" fill="#8b1fa8" /><path d="M1314 527.300H1344" fill="none" stroke="#c0392b" stroke-width="1" stroke-linejoin="round" /><path d="M1313.0 533.0 L1344.0 532.0 L1344.5 539.0 L1313.5 540.0Z" fill="#7fb5e4" /><path d="M1314.2 532.8 L1342.5 532.2 L1343.0 537.4 L1314.6 538.4Z" fill="#15171a" /><path d="M1323 535l7 1.500" fill="none" stroke="#cfd6e0" stroke-width="0.9" stroke-linejoin="round" /><path d="M1354.0 457.8 L1362.0 462.0 L1370.0 468.0 L1377.6 471.8 L1377.0 500.0 L1376.6 528.8 L1361.5 528.8 L1358.5 505.0 L1355.0 480.4Z" fill="#1d1d1f" stroke="#8b1fa8" stroke-width="1.8" stroke-linejoin="round" /><circle cx="1354.0" cy="457.8" r="1.8" fill="#8b1fa8"/><circle cx="1377.6" cy="471.8" r="1.8" fill="#8b1fa8"/><circle cx="1373.0" cy="470.0" r="1.8" fill="#8b1fa8"/><path d="M1366 464V528M1355 472.500H1377" fill="none" stroke="#cfcfee" stroke-width="1.1" stroke-dasharray="2.2 1.6"/><rect x="1360.0" y="528.5" width="19.0" height="4.5" fill="#8b1fa8" /><path d="M1361 528.800H1378" fill="none" stroke="#c0392b" stroke-width="1" stroke-linejoin="round" /><path d="M1361.5 534.0 L1379.0 535.0 L1378.5 541.5 L1362.0 540.5Z" fill="#7fb5e4" /><path d="M1362.5 534.0 L1377.5 535.0 L1377.0 540.0 L1363.0 539.0Z" fill="#15171a" /><rect x="1156.9" y="372.8" width="27.6" height="9.6" fill="#7fb5e4" /><rect x="1156.9" y="385.9" width="27.6" height="30.3" fill="#7fb5e4" /><rect x="1160.4" y="366.3" width="20.6" height="4.3" fill="#2a2a2c" stroke="#111" stroke-width="0.6" /><path d="M1161.4 368.5H1180" fill="none" stroke="#aaa" stroke-width="0.8" stroke-dasharray="1.500 1.500"/><rect x="1159.4" y="371.8" width="22.6" height="8.6" fill="#0d3b59" stroke="#b4127c" stroke-width="2" rx="1.5"/><rect x="1159.4" y="386.9" width="22.6" height="25.8" fill="#0d3b59" stroke="#b4127c" stroke-width="1.8" /><circle cx="1159.4" cy="371.8" r="1.7" fill="#b4127c"/><circle cx="1182.0" cy="371.8" r="1.7" fill="#b4127c"/><circle cx="1159.4" cy="380.4" r="1.7" fill="#b4127c"/><circle cx="1182.0" cy="380.4" r="1.7" fill="#b4127c"/><circle cx="1159.4" cy="386.9" r="1.7" fill="#b4127c"/><circle cx="1182.0" cy="386.9" r="1.7" fill="#b4127c"/><circle cx="1159.4" cy="412.7" r="1.7" fill="#b4127c"/><circle cx="1182.0" cy="412.7" r="1.7" fill="#b4127c"/><path d="M1161.4 376.6H1180" fill="none" stroke="#cfcfee" stroke-width="1.3" stroke-dasharray="2 1.3"/><path d="M1170.7 387.9V411.7" fill="none" stroke="#cfcfee" stroke-width="1.1" stroke-dasharray="2.2 1.6"/><path d="M1160.4 391.4H1181" fill="none" stroke="#cfcfee" stroke-width="1.1" stroke-dasharray="2.2 1.6"/><rect x="1271.9" y="373.9" width="29.1" height="9.6" fill="#7fb5e4" /><rect x="1271.9" y="385.9" width="29.1" height="30.3" fill="#7fb5e4" /><rect x="1274.4" y="372.9" width="24.1" height="8.6" fill="#0d3b59" stroke="#b4127c" stroke-width="2" rx="1.5"/><rect x="1274.4" y="386.9" width="24.1" height="25.8" fill="#0d3b59" stroke="#b4127c" stroke-width="1.8" /><circle cx="1274.4" cy="372.9" r="1.7" fill="#b4127c"/><circle cx="1298.5" cy="372.9" r="1.7" fill="#b4127c"/><circle cx="1274.4" cy="381.5" r="1.7" fill="#b4127c"/><circle cx="1298.5" cy="381.5" r="1.7" fill="#b4127c"/><circle cx="1274.4" cy="386.9" r="1.7" fill="#b4127c"/><circle cx="1298.5" cy="386.9" r="1.7" fill="#b4127c"/><circle cx="1274.4" cy="412.7" r="1.7" fill="#b4127c"/><circle cx="1298.5" cy="412.7" r="1.7" fill="#b4127c"/><path d="M1276.4 377.7H1296.5" fill="none" stroke="#cfcfee" stroke-width="1.3" stroke-dasharray="2 1.3"/><path d="M1286.5 387.9V411.7" fill="none" stroke="#cfcfee" stroke-width="1.1" stroke-dasharray="2.2 1.6"/><path d="M1275.4 391.4H1297.5" fill="none" stroke="#cfcfee" stroke-width="1.1" stroke-dasharray="2.2 1.6"/><rect x="1300.5" y="383.6" width="24.8" height="9.6" fill="#7fb5e4" /><rect x="1300.5" y="395.6" width="24.8" height="20.6" fill="#7fb5e4" /><rect x="1303.0" y="382.6" width="19.8" height="8.6" fill="#0d3b59" stroke="#b4127c" stroke-width="2" rx="1.5"/><rect x="1303.0" y="396.6" width="19.8" height="16.1" fill="#0d3b59" stroke="#b4127c" stroke-width="1.8" /><circle cx="1303.0" cy="382.6" r="1.7" fill="#b4127c"/><circle cx="1322.8" cy="382.6" r="1.7" fill="#b4127c"/><circle cx="1303.0" cy="391.2" r="1.7" fill="#b4127c"/><circle cx="1322.8" cy="391.2" r="1.7" fill="#b4127c"/><circle cx="1303.0" cy="396.6" r="1.7" fill="#b4127c"/><circle cx="1322.8" cy="396.6" r="1.7" fill="#b4127c"/><circle cx="1303.0" cy="412.7" r="1.7" fill="#b4127c"/><circle cx="1322.8" cy="412.7" r="1.7" fill="#b4127c"/><path d="M1305 387.4H1320.8" fill="none" stroke="#cfcfee" stroke-width="1.3" stroke-dasharray="2 1.3"/><path d="M1312.9 397.6V411.7" fill="none" stroke="#cfcfee" stroke-width="1.1" stroke-dasharray="2.2 1.6"/><path d="M1304 401.1H1321.8" fill="none" stroke="#cfcfee" stroke-width="1.1" stroke-dasharray="2.2 1.6"/><path d="M1319.500 549.500 L1330.500 548.200 Q1332.500 548.200 1332.800 550.200 L1331.500 568 Q1331.200 569.800 1329.300 569.800 L1318.800 569.500 Q1317 569.300 1317 567.500 L1317.800 551.200 Q1318 549.700 1319.500 549.500Z" fill="#fff" stroke="#b4127c" stroke-width="1.8" stroke-linejoin="round" /><circle cx="1319.0" cy="549.5" r="1.6" fill="#b4127c"/><path d="M1051.4 587.0 L1058.0 586.5 L1065.0 584.0 L1084.0 590.4 L1081.0 600.0 L1080.8 608.0 L1084.0 617.0 L1090.0 624.0 L1090.0 688.0 L1052.5 689.0 L1051.5 640.0 L1049.0 601.0Z" fill="#050505" /><path d="M1049.500 601 Q1060 600 1069.500 584.500" fill="none" stroke="#d04030" stroke-width="1.3" stroke-linejoin="round" /><path d="M1052.500 640H1089.500" fill="none" stroke="#cfcfee" stroke-width="1.1" stroke-dasharray="2.2 1.6"/><path d="M1051 603 L1052.500 640" fill="none" stroke="#9a9ad0" stroke-width="1" stroke-dasharray="2.2 1.6"/><path d="M1110.5 628.0 L1118.0 625.0 L1128.0 619.0 L1135.0 613.5 L1136.0 640.0 L1133.5 684.0 L1112.5 684.0 L1113.0 655.0Z" fill="#7fb5e4" stroke="#7fb5e4" stroke-width="7.5" stroke-linejoin="round"/><path d="M1140.5 613.0 L1146.0 608.0 L1155.0 604.0 L1164.0 606.5 L1172.0 613.0 L1179.0 626.0 L1177.0 655.0 L1176.5 684.0 L1151.0 687.5 L1146.0 655.0Z" fill="#7fb5e4" stroke="#7fb5e4" stroke-width="7.5" stroke-linejoin="round"/><path d="M1110.5 628.0 L1118.0 625.0 L1128.0 619.0 L1135.0 613.5 L1136.0 640.0 L1133.5 684.0 L1112.5 684.0 L1113.0 655.0Z" fill="#050505" /><path d="M1140.5 613.0 L1146.0 608.0 L1155.0 604.0 L1164.0 606.5 L1172.0 613.0 L1179.0 626.0 L1177.0 655.0 L1176.5 684.0 L1151.0 687.5 L1146.0 655.0Z" fill="#050505" /><path d="M1124 628V684M1154.500 606V686" fill="none" stroke="#cfcfee" stroke-width="1.1" stroke-dasharray="2.2 1.6"/><path d="M1184.6 620.0 L1191.0 616.0 L1194.0 606.0 L1193.0 591.0 L1207.0 581.0 L1212.0 600.0 L1216.0 624.0 L1218.0 650.0 L1217.5 686.0 L1184.6 686.0Z" fill="#7fb5e4" stroke="#7fb5e4" stroke-width="7.5" stroke-linejoin="round"/><path d="M1227.5 686.0 L1227.0 650.0 L1229.0 620.0 L1233.0 598.0 L1238.0 581.0 L1251.0 589.0 L1250.0 605.0 L1254.0 616.0 L1260.5 620.0 L1261.0 686.0Z" fill="#7fb5e4" stroke="#7fb5e4" stroke-width="7.5" stroke-linejoin="round"/><path d="M1184.6 620.0 L1191.0 616.0 L1194.0 606.0 L1193.0 591.0 L1207.0 581.0 L1212.0 600.0 L1216.0 624.0 L1218.0 650.0 L1217.5 686.0 L1184.6 686.0Z" fill="#050505" /><path d="M1227.5 686.0 L1227.0 650.0 L1229.0 620.0 L1233.0 598.0 L1238.0 581.0 L1251.0 589.0 L1250.0 605.0 L1254.0 616.0 L1260.5 620.0 L1261.0 686.0Z" fill="#050505" /><path d="M1187 636.500H1216" fill="none" stroke="#cfcfee" stroke-width="1.1" stroke-dasharray="2.2 1.6"/><path d="M1229 634H1258" fill="none" stroke="#cfcfee" stroke-width="1.6" stroke-dasharray="2.2 1.800"/><path d="M1276.8 627.0 L1282.0 617.0 L1290.0 609.0 L1300.0 604.0 L1309.0 606.0 L1315.6 613.0 L1313.0 650.0 L1311.0 686.0 L1280.0 684.0 L1279.0 655.0Z" fill="#7fb5e4" stroke="#7fb5e4" stroke-width="7.5" stroke-linejoin="round"/><path d="M1319.8 613.5 L1328.0 620.0 L1337.0 625.5 L1345.0 628.0 L1344.5 655.0 L1343.0 685.0 L1328.0 688.0 L1325.0 655.0Z" fill="#7fb5e4" stroke="#7fb5e4" stroke-width="7.5" stroke-linejoin="round"/><path d="M1276.8 627.0 L1282.0 617.0 L1290.0 609.0 L1300.0 604.0 L1309.0 606.0 L1315.6 613.0 L1313.0 650.0 L1311.0 686.0 L1280.0 684.0 L1279.0 655.0Z" fill="#050505" /><path d="M1319.8 613.5 L1328.0 620.0 L1337.0 625.5 L1345.0 628.0 L1344.5 655.0 L1343.0 685.0 L1328.0 688.0 L1325.0 655.0Z" fill="#050505" /><path d="M1301.500 606V685M1331.500 628V686" fill="none" stroke="#cfcfee" stroke-width="1.1" stroke-dasharray="2.2 1.6"/><path d="M1363.0 589.0 L1382.0 581.0 L1389.0 584.0 L1395.0 586.0 L1397.4 600.0 L1396.0 640.0 L1395.0 687.0 L1357.5 686.0 L1357.5 622.0 L1363.5 615.0 L1366.0 606.0 L1365.0 597.0Z" fill="#050505" /><path d="M1379.500 582.500 Q1385 596 1398 598.500" fill="none" stroke="#d04030" stroke-width="1.3" stroke-linejoin="round" /><path d="M1359 637.500H1395" fill="none" stroke="#cfcfee" stroke-width="1.1" stroke-dasharray="2.2 1.6"/><path d="M1396.500 600 L1395 637" fill="none" stroke="#9a9ad0" stroke-width="1" stroke-dasharray="2.2 1.6"/></g>
</svg>
<div class="abs" style="left:903px;top:134px;width:27px;height:27px;background:linear-gradient(#d8d8d8,#cdcdcd);border:1px solid #b2b2b2;border-radius:2px;opacity:1"></div>
<div class="abs" style="left:903px;top:163px;width:27px;height:27px;background:linear-gradient(#d8d8d8,#cdcdcd);border:1px solid #b2b2b2;border-radius:2px;opacity:1"></div>
<div class="abs" style="left:903px;top:192px;width:27px;height:27px;background:linear-gradient(#d8d8d8,#cdcdcd);border:1px solid #b2b2b2;border-radius:2px;opacity:1"></div>
<div class="abs" style="left:903px;top:221px;width:27px;height:27px;background:linear-gradient(#d8d8d8,#cdcdcd);border:1px solid #8c8c8c;border-radius:2px;opacity:1"></div>
<div class="abs" style="left:903px;top:250px;width:27px;height:27px;background:linear-gradient(#d8d8d8,#cdcdcd);border:1px solid #b2b2b2;border-radius:2px;opacity:0.6"></div>
<svg class="abs" style="left:903px;top:134px" width="27" height="145" viewBox="903 134 27 145">
<defs><linearGradient id="pg1" x1="0" y1="0" x2="1" y2="1"><stop offset="0" stop-color="#19b4f5"/><stop offset="1" stop-color="#0a8fe0"/></linearGradient></defs>
<path d="M910.500 139.500l3-1 13 13.500-1.500 0.500z" fill="#1a1a1a"/><path d="M911.500 140q-5 6-1.500 14" stroke="#4a90d9" stroke-width="1" fill="none"/><path d="M906 156q5-4.500 10 0q-5 4.500-10 0z" fill="#f4f4f4" stroke="#1c1c1c" stroke-width="0.900"/><circle cx="911" cy="156" r="1.900" fill="#1c1c1c"/>
<path d="M912 168q4 3 8 0l6.500 3-2.500 4.500-2-1v10.500h-12v-10.500l-2 1-2.500-4.500z" fill="#fbfbfb" stroke="#c4c4c4" stroke-width="0.600"/><path d="M906 185q5-4.500 10 0q-5 4.500-10 0z" fill="#f4f4f4" stroke="#1c1c1c" stroke-width="0.900"/><circle cx="911" cy="185" r="1.900" fill="#1c1c1c"/>
<circle cx="918" cy="203.500" r="8.300" fill="#383838"/><path d="M917 201.500h2.700v7h-2.700zM917.200 197.500h2.600v2.600h-2.600z" fill="#27c2f2"/><path d="M905 213.5q5-4.500 10 0q-5 4.500-10 0z" fill="#f4f4f4" stroke="#1c1c1c" stroke-width="0.900"/><circle cx="910" cy="213.5" r="1.900" fill="#1c1c1c"/>
<path d="M909 228l5-1v13l-5 1z" fill="#f6f6f6" stroke="#8a8a8a" stroke-width="0.700"/><path d="M909 240q5-1 9 1l4-1" fill="none" stroke="#f6f6f6" stroke-width="2"/><path d="M914 226q4-2 7-1t5-1l-2.500 13q-3 2-6 1t-5.500 1z" fill="url(#pg1)"/>
<g opacity="0.65"><path d="M912 255q4 3 8 0l6.500 3-2.500 4.500-2-1v10.500h-12v-10.500l-2 1-2.500-4.500z" fill="#fff"/><rect x="906.500" y="266" width="6.500" height="5.500" fill="#6a6a6a"/><path d="M907.700 266v-2a2 2 0 0 1 4 0v2" fill="none" stroke="#6a6a6a" stroke-width="1.200"/></g>
</svg>
<div class="abs" style="left:1472px;top:38px;width:5px;height:971px;background:#252527"></div>
<div class="abs" style="left:1477px;top:58px;width:431px;height:642px;background:#2d2d2f;border-left:1px solid #222224;border-bottom:1px solid #3a3a3c"></div>
<div class="abs" style="left:1478px;top:58px;width:368px;height:24px;background:#202022"></div>
<div class="abs" style="left:1478px;top:82px;width:430px;height:1px;background:#232325"></div>
<div class="abs" style="left:1524px;top:58px;width:46px;height:24px;background:linear-gradient(#3c3c3e,#323234)"></div>
<div class="abs" style="left:1524px;top:59px;width:1px;height:22px;background:#2a2a2c"></div>
<div class="abs" style="left:1570px;top:59px;width:1px;height:22px;background:#2a2a2c"></div>
<div class="abs" style="left:1616px;top:59px;width:1px;height:22px;background:#2a2a2c"></div>
<div class="abs" style="left:1662px;top:59px;width:1px;height:22px;background:#2a2a2c"></div>
<div class="abs" style="left:1708px;top:59px;width:1px;height:22px;background:#2a2a2c"></div>
<div class="abs" style="left:1754px;top:59px;width:1px;height:22px;background:#2a2a2c"></div>
<div class="abs" style="left:1800px;top:59px;width:1px;height:22px;background:#2a2a2c"></div>
<div class="abs" style="left:1846px;top:59px;width:1px;height:22px;background:#2a2a2c"></div>
<svg class="abs" style="left:1478px;top:58px" width="370" height="24" viewBox="1478 58 370 24">
<g fill="#d8d8d8"><rect x="1494" y="64.500" width="2" height="2"/><rect x="1498" y="64.500" width="9" height="2"/><rect x="1494" y="68.500" width="2" height="2"/><rect x="1498" y="68.500" width="9" height="2"/><rect x="1494" y="72.500" width="2" height="2"/><rect x="1498" y="72.500" width="9" height="2"/></g>
<path d="M1539.500 66.500l4.500-1v10.500l-4.500 1z" fill="#f2f2f2"/><path d="M1539.500 77q4-1.500 7 0.500t6.500-0.500" fill="none" stroke="#f2f2f2" stroke-width="2"/><path d="M1543.500 63.500q4.500-2 7 0t5-1l-2 11.500q-3.500 2-6 1t-4 0.500z" fill="#22b0f0"/>
<circle cx="1593" cy="69" r="8" fill="#b4b4b4"/><g fill="#2a2a2a"><circle cx="1590.700" cy="66.700" r="1.300"/><circle cx="1595.300" cy="66.700" r="1.300"/><circle cx="1590.700" cy="71.300" r="1.300"/><circle cx="1595.300" cy="71.300" r="1.300"/></g>
<path d="M1632 69h15" stroke="#bdbdbd" stroke-width="1.800"/><circle cx="1632.500" cy="69" r="2.200" fill="#bdbdbd"/>
<path d="M1678 76l14-13" stroke="#cfcfcf" stroke-width="2.200" stroke-dasharray="4 2.500"/>
<path d="M1722.500 75.500 L1725 65 Q1726 62.500 1727.200 65 L1728.500 72 L1730.500 64 Q1731.500 61.500 1732.700 64 L1734 71 L1736 63 Q1737 60.500 1738.200 63 L1739.500 68.500" fill="none" stroke="#c8c8c8" stroke-width="1.700" stroke-linecap="round" stroke-linejoin="round"/>
<path d="M1767 78v-9l2.500-3v-3h3v3l2 3v9z" fill="#8e8e8e"/><path d="M1772.500 78v-11l2.500-3.500v-3.500h3.500v3.500l2.500 3.500v11z" fill="#bdbdbd"/><path d="M1780 78v-9l2-3v-3h3v3l2 3v9z" fill="#8e8e8e"/>
<rect x="1815" y="65" width="16" height="6" fill="#d0d0d0"/><path d="M1817.500 71v-3.500M1820 71v-3.500M1822.500 71v-3.500M1825 71v-3.500M1827.500 71v-3.500" stroke="#333" stroke-width="1"/>
</svg>
<div class="btn" style="left:1711px;width:59px;color:#e4e4e4"><span style="position:absolute;left:8px;top:-1px;font-size:15px;color:#cfcfcf">+</span><span style="position:absolute;left:25px">Add</span></div>
<div class="btn" style="left:1773px;width:63px;color:#4e4e50;background:#2b2b2d"><span style="position:absolute;left:24px">Copy</span></div>
<div class="btn" style="left:1839px;width:69px;color:#4e4e50;background:#2b2b2d;border-right:none"><span style="position:absolute;left:24px">Assign</span></div>
<div class="abs" style="left:1488px;top:128px;width:420px;height:1px;background:#3a3a3c"></div>
<div class="row" style="top:129px"><div class="sw" style="background:#1f1f21"></div><div class="nm">MAINFABRIC_1</div><div class="ri"><div style="position:absolute;left:2px;top:2px;width:7px;height:7px;background:#6e6e70"></div><div style="position:absolute;left:5px;top:3px;width:1px;height:5px;background:#2d2d2f"></div><div style="position:absolute;left:3px;top:5px;width:5px;height:1px;background:#2d2d2f"></div></div></div>
<div class="row" style="top:175px"><div class="sw" style="background:#0a3a58"></div><div class="nm">MAINFABRIC_2</div><div class="ri"><div style="position:absolute;left:2px;top:2px;width:7px;height:7px;background:#6e6e70"></div><div style="position:absolute;left:5px;top:3px;width:1px;height:5px;background:#2d2d2f"></div><div style="position:absolute;left:3px;top:5px;width:5px;height:1px;background:#2d2d2f"></div></div></div>
<div class="row" style="top:221px"><div class="sw" style="background:#020202"><span style="position:absolute;left:2px;top:10px;font-size:14px;color:#3c3c3c;letter-spacing:-1px;transform:scaleX(0.6);transform-origin:0 0">CLO</span></div><div class="nm">LINING</div><div class="ri"><div style="position:absolute;left:2px;top:2px;width:7px;height:7px;background:#6e6e70"></div><div style="position:absolute;left:5px;top:3px;width:1px;height:5px;background:#2d2d2f"></div><div style="position:absolute;left:3px;top:5px;width:5px;height:1px;background:#2d2d2f"></div></div></div>
<div class="row" style="top:267px"><div class="sw" style="background:#0a0a0a"></div><div class="nm">LABEL</div><div class="ri"><div style="position:absolute;left:2px;top:2px;width:7px;height:7px;background:#6e6e70"></div><div style="position:absolute;left:5px;top:3px;width:1px;height:5px;background:#2d2d2f"></div><div style="position:absolute;left:3px;top:5px;width:5px;height:1px;background:#2d2d2f"></div></div></div>
<div class="row" style="top:313px"><div class="sw" style="background:#6a6a6a"></div><div class="nm">FABRIC_3</div><div class="ri"><div style="position:absolute;left:2px;top:2px;width:7px;height:7px;background:#6e6e70"></div><div style="position:absolute;left:5px;top:3px;width:1px;height:5px;background:#2d2d2f"></div><div style="position:absolute;left:3px;top:5px;width:5px;height:1px;background:#2d2d2f"></div></div></div>
<div class="row" style="top:359px"><div class="sw" style="background:#ffffff"></div><div class="nm">FABRIC_4</div><div class="ri"><div style="position:absolute;left:2px;top:2px;width:7px;height:7px;background:#6e6e70"></div><div style="position:absolute;left:5px;top:3px;width:1px;height:5px;background:#2d2d2f"></div><div style="position:absolute;left:3px;top:5px;width:5px;height:1px;background:#2d2d2f"></div></div></div>
<div class="row" style="top:405px"><div class="sw" style="background:#161616"></div><div class="nm">FABRIC_5</div><div class="ri"><div style="position:absolute;left:2px;top:2px;width:7px;height:7px;background:#6e6e70"></div><div style="position:absolute;left:5px;top:3px;width:1px;height:5px;background:#2d2d2f"></div><div style="position:absolute;left:3px;top:5px;width:5px;height:1px;background:#2d2d2f"></div></div></div>
<div class="row" style="top:451px"><div class="sw" style="background:#4a4a4a"></div><div class="nm">FABRIC_6</div><div class="ri"><div style="position:absolute;left:2px;top:2px;width:7px;height:7px;background:#6e6e70"></div><div style="position:absolute;left:5px;top:3px;width:1px;height:5px;background:#2d2d2f"></div><div style="position:absolute;left:3px;top:5px;width:5px;height:1px;background:#2d2d2f"></div></div></div>
<svg class="abs" style="left:1501px;top:144px" width="18" height="15" viewBox="0 0 18 15"><path d="M1.500 7l5 5.500L16.500 1.500" fill="none" stroke="#3db3f2" stroke-width="3"/></svg>
<div class="abs" style="left:1477px;top:700px;width:431px;height:6px;background:#2b2b2d"></div>
<div class="abs" style="left:1477px;top:706px;width:431px;height:18px;background:#1e1e20;text-align:center;font-size:12.500px;line-height:19px;color:#e6e6e6"><span style="position:relative;left:-1px">Property Editor</span></div>
<svg class="abs" style="left:1478px;top:710px" width="10" height="9" viewBox="0 0 10 9"><path d="M0 3h4V0.500l5 4-5 4V6H0z" fill="#b9b9b9"/></svg><div class="abs" style="left:1490px;top:708px;width:1px;height:15px;background:#3a3a3c"></div>
<svg class="abs" style="left:1896px;top:709px" width="12" height="11" viewBox="0 0 12 11"><path d="M1 3.5h5M1 3.5v6h7v-4" fill="none" stroke="#9a9a9a" stroke-width="1.2"/><path d="M5 6.5l5-5M6.5 1h4v4" fill="none" stroke="#9a9a9a" stroke-width="1.2"/></svg>
<div class="abs" style="left:1477px;top:724px;width:431px;height:285px;background:#2d2d2f;border-left:1px solid #222224"></div>
<div class="abs" style="left:28px;top:1005px;width:1449px;height:4px;background:#2b2b2d"></div>
</body></html>
